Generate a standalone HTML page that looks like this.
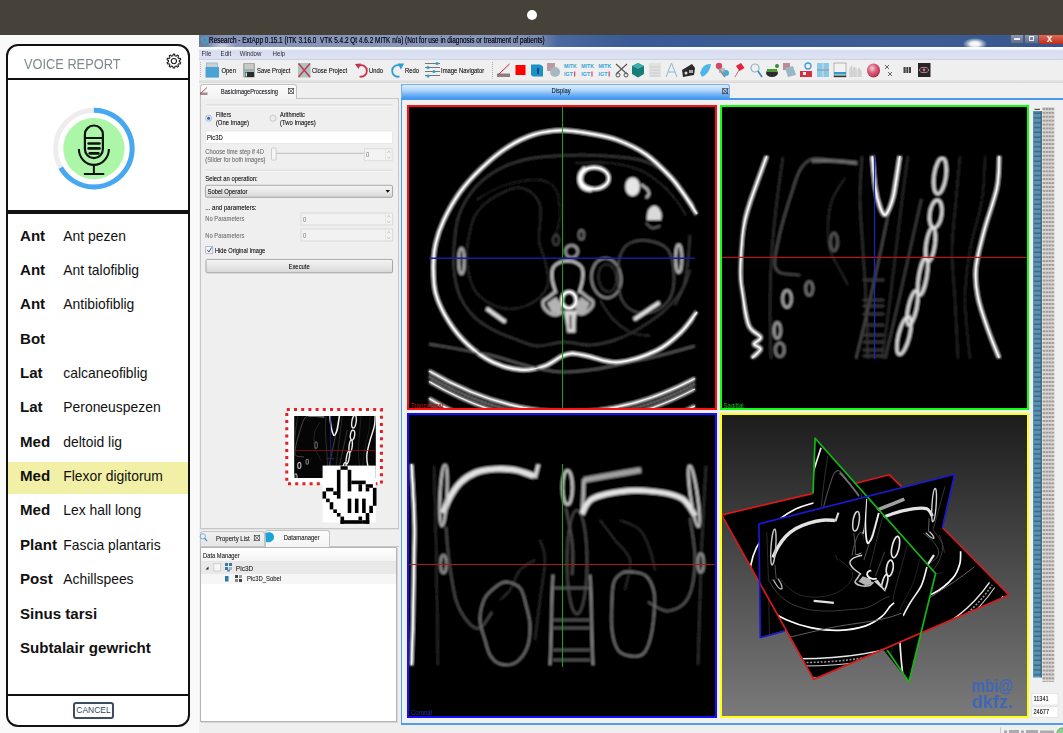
<!DOCTYPE html>
<html><head><meta charset="utf-8">
<style>
*{margin:0;padding:0;box-sizing:border-box}
html,body{width:1063px;height:733px;overflow:hidden;background:#f9f9f9;font-family:"Liberation Sans",sans-serif;position:relative}
.a{position:absolute}
#topbar{left:0;top:0;width:1063px;height:34.5px;background:#46423a}
#dot{left:526.5px;top:9.5px;width:10px;height:10px;border-radius:50%;background:#fff}
#vp{left:6px;top:44.3px;width:184px;height:682.9px;border:2.6px solid #111;border-radius:12px;background:#fff;overflow:hidden}
.hl{left:0;width:184px;background:#111}
#vtitle{left:16px;top:11.9px;font-size:12.8px;color:#7b8b8b;line-height:1;transform:scaleY(1.08);transform-origin:0 0}
.row{left:12px;height:0;color:#111;white-space:nowrap;line-height:1}
.row b{font-weight:bold;position:absolute;left:0;top:-12.78px;font-size:15.1px}
.row span{position:absolute;left:43.3px;top:-10.9px;font-size:13.9px}
#cancel{left:65px;top:655.5px;width:41px;height:17px;border:2px solid #3c4d62;border-radius:3px;font-size:8.5px;color:#34465a;text-align:center;line-height:13px}
/* app */
#app{left:198.8px;top:34.5px;width:864.2px;height:698.5px;background:#efefef}
#title{left:198.8px;top:34.5px;width:864.2px;height:13.2px;background:linear-gradient(90deg,#6a7aa2 0%,#8593b6 3%,#8896b8 30%,#8391b4 37%,#7587ad 39.5%,#4a68a0 41.5%,#3a5a95 50%,#3d5c95 85%,#36558e 100%);overflow:hidden}
#title .t{left:10.2px;top:1.6px;font-size:6.44px;line-height:1;color:#141424;white-space:nowrap;transform:scaleY(1.3);transform-origin:0 0;text-shadow:0 0 0.4px #223}
#menu{left:198.8px;top:47.4px;width:864.2px;height:12.3px;background:linear-gradient(#fcfdff 0,#fafbfe 12%,#d6ddef 30%,#dde3f3 85%,#c9cfe0 100%)}
#menu span{position:absolute;top:2.6px;font-size:6.1px;line-height:1;color:#2a2a3a;transform:scaleY(1.15);transform-origin:0 0}
#tool{left:198.8px;top:59.7px;width:864.2px;height:20px;background:#efefef}
#tsep{left:198.8px;top:79.7px;width:864.2px;height:3.8px;background:linear-gradient(#e6e6e6,#d9d9d9)}
.q{position:absolute;font-size:5.9px;line-height:1;color:#222;white-space:nowrap;transform:scaleY(1.15);transform-origin:0 0;text-shadow:0 0 0.35px rgba(0,0,0,0.45)}
.view{background:#000;overflow:hidden}
</style></head><body>
<div id="topbar" class="a"><div id="dot" class="a"></div></div>

<!-- voice panel -->
<div id="vp" class="a">
  <div id="vtitle" class="a">VOICE REPORT</div>
  <svg class="a" style="left:0;top:0" width="184" height="200" viewBox="0 0 184 200">
    <path d="M164.89,9.80 L165.15,8.14 L166.65,8.14 L166.91,9.80 L168.20,10.21 L169.39,9.03 L170.59,9.91 L169.84,11.40 L170.63,12.50 L172.29,12.24 L172.75,13.66 L171.26,14.42 L171.26,15.78 L172.75,16.54 L172.29,17.96 L170.63,17.70 L169.84,18.80 L170.59,20.29 L169.39,21.17 L168.20,19.99 L166.91,20.40 L166.65,22.06 L165.15,22.06 L164.89,20.40 L163.60,19.99 L162.41,21.17 L161.21,20.29 L161.96,18.80 L161.17,17.70 L159.51,17.96 L159.05,16.54 L160.54,15.78 L160.54,14.42 L159.05,13.66 L159.51,12.24 L161.17,12.50 L161.96,11.40 L161.21,9.91 L162.41,9.03 L163.60,10.21Z" fill="none" stroke="#1a1a1a" stroke-width="1.05" stroke-linejoin="round"/>
    <circle cx="165.9" cy="15.1" r="2.6" fill="none" stroke="#1a1a1a" stroke-width="1.05"/>
    <g transform="translate(85.9,102.6)">
      <circle r="38.3" fill="none" stroke="#ededed" stroke-width="5"/>
      <path d="M0,-38.3 A38.3,38.3 0 1 1 -33.17,19.15" fill="none" stroke="#45a8f1" stroke-width="5"/>
      <circle r="30.7" fill="#abf7a7"/>
      <rect x="-9" y="-23.1" width="18" height="32.6" rx="9" fill="none" stroke="#111" stroke-width="2.2"/>
      <line x1="-9" y1="-10.6" x2="9" y2="-10.6" stroke="#111" stroke-width="2"/>
      <line x1="-5.3" y1="-5.1" x2="5.6" y2="-5.1" stroke="#111" stroke-width="2.6" stroke-linecap="round"/>
      <line x1="-5.3" y1="-0.2" x2="5.6" y2="-0.2" stroke="#111" stroke-width="2.6" stroke-linecap="round"/>
      <line x1="-4.2" y1="4.8" x2="4.5" y2="4.8" stroke="#111" stroke-width="2.6" stroke-linecap="round"/>
      <path d="M-15,0.4 A15,15.9 0 0 0 15,0.4" fill="none" stroke="#111" stroke-width="2.1"/>
      <line x1="0" y1="16.3" x2="0" y2="25.4" stroke="#111" stroke-width="2"/>
      <line x1="-10" y1="25.4" x2="10.3" y2="25.4" stroke="#111" stroke-width="2"/>
    </g>
  </svg>
  <div class="hl a" style="top:31.5px;height:2px"></div>
  <div class="hl a" style="top:163.5px;height:3.8px"></div>
  <div class="a" style="left:0;top:416.2px;width:184px;height:31.5px;background:#f1f0a6"></div>
  <div class="row a" style="top:194.1px"><b>Ant</b><span>Ant pezen</span></div>
  <div class="row a" style="top:228.4px"><b>Ant</b><span>Ant talofiblig</span></div>
  <div class="row a" style="top:262.8px"><b>Ant</b><span>Antibiofiblig</span></div>
  <div class="row a" style="top:297.1px"><b>Bot</b></div>
  <div class="row a" style="top:331.5px"><b>Lat</b><span>calcaneofiblig</span></div>
  <div class="row a" style="top:365.9px"><b>Lat</b><span>Peroneuspezen</span></div>
  <div class="row a" style="top:400.2px"><b>Med</b><span>deltoid lig</span></div>
  <div class="row a" style="top:434.6px"><b>Med</b><span>Flexor digitorum</span></div>
  <div class="row a" style="top:468.9px"><b>Med</b><span>Lex hall long</span></div>
  <div class="row a" style="top:503.2px"><b>Plant</b><span>Fascia plantaris</span></div>
  <div class="row a" style="top:537.6px"><b>Post</b><span>Achillspees</span></div>
  <div class="row a" style="top:572.0px"><b>Sinus tarsi</b></div>
  <div class="row a" style="top:606.3px"><b>Subtalair gewricht</b></div>
  <div class="hl a" style="top:647.8px;height:2.2px"></div>
  <div id="cancel" class="a">CANCEL</div>
</div>

<div id="app" class="a"></div>
<div id="title" class="a"><svg class="a" style="left:0;top:0" width="12" height="13"><circle cx="5.5" cy="5" r="2.6" fill="none" stroke="#3aa8c8" stroke-width="1.2"/><line x1="7" y1="7" x2="9.8" y2="11" stroke="#2aa0c0" stroke-width="1.4"/></svg><div class="a" style="left:8px;top:6px;width:30px;height:9px;border-radius:50%;background:radial-gradient(rgba(255,255,255,0.55),rgba(255,255,255,0) 70%)"></div><div class="t a">Research - ExtApp 0.15.1 (ITK 3.16.0&nbsp; VTK 5.4.2 Qt 4.6.2 MITK n/a) (Not for use in diagnosis or treatment of patients)</div>
  <div class="a" style="left:764px;top:3px;width:24px;height:12px;border-radius:50%;background:radial-gradient(rgba(255,255,255,0.95) 25%,rgba(220,235,220,0.5) 50%,rgba(255,255,255,0) 72%)"></div>
  <div class="a" style="left:811px;top:0;width:14px;height:9px;background:linear-gradient(#8b97b3,#5b6d92);border:1px solid #48597e;border-top:0;border-radius:0 0 2px 2px"><div class="a" style="left:3px;top:3px;width:6px;height:2px;background:#eee"></div></div>
  <div class="a" style="left:825px;top:0;width:15px;height:9px;background:linear-gradient(#8b97b3,#5b6d92);border:1px solid #48597e;border-top:0;border-radius:0 0 2px 2px"><div class="a" style="left:4px;top:1px;width:5px;height:5px;border:1.5px solid #eee"></div></div>
  <div class="a" style="left:840px;top:0;width:25px;height:9.5px;background:linear-gradient(#e06a55,#c02c1a);border-radius:0 0 0 2px"><div class="a" style="left:8px;top:-2px;font-size:10px;color:#f4f4f4;font-weight:bold">x</div></div>
</div>
<div id="menu" class="a"><span style="left:2.7px">File</span><span style="left:21.8px">Edit</span><span style="left:40.9px">Window</span><span style="left:73.8px">Help</span></div>
<div id="tool" class="a"></div>
<svg class="a" style="left:0;top:0" width="1063" height="84" viewBox="0 0 1063 84">
  <!-- grip -->
  <line x1="200.5" y1="62" x2="200.5" y2="78" stroke="#b8b8b8" stroke-width="1" stroke-dasharray="1,1"/>
  <!-- open -->
  <rect x="206.5" y="63" width="11" height="7" fill="#cfcfcf" stroke="#8ab8d8" stroke-width="0.8"/>
  <path d="M205.5,67 h13.5 v10.6 h-13.5z" fill="#49a3d6"/>
  <!-- save -->
  <rect x="243" y="63" width="12" height="14.5" rx="1" fill="#a9a9a9"/>
  <rect x="244.5" y="64" width="9" height="5" fill="#c9c9c9"/>
  <rect x="244" y="71" width="10.5" height="6" fill="#8cc0c8"/>
  <rect x="245" y="72" width="9" height="5" fill="#2a2a2a"/><rect x="245.5" y="72.5" width="1.5" height="4" fill="#e0e0e0"/>
  <!-- close -->
  <rect x="298" y="63" width="12.5" height="14.5" fill="#a9c7c9"/>
  <path d="M298.5,63.5 L310,77 M310,63.5 L298.5,77" stroke="#d03848" stroke-width="1.6"/>
  <!-- undo -->
  <path d="M359,65.5 A5.8,5.8 0 1 1 359.5,76.5" fill="none" stroke="#c83250" stroke-width="1.8"/>
  <path d="M355,64 L361,63.5 L358.5,69 z" fill="#c83250"/>
  <!-- redo -->
  <path d="M400,65.5 A5.8,5.8 0 1 0 399.5,76.5" fill="none" stroke="#2c9fd0" stroke-width="1.8"/>
  <path d="M404,63.5 L397.5,63.5 L401,69.5 z" fill="#2c9fd0"/>
  <!-- image navigator -->
  <g stroke="#666" stroke-width="0.9"><line x1="425" y1="63.5" x2="440" y2="63.5"/><line x1="425" y1="67.5" x2="440" y2="67.5"/><line x1="425" y1="71.5" x2="440" y2="71.5"/><line x1="425" y1="75.5" x2="440" y2="75.5"/></g>
  <g fill="#2c9fd0"><circle cx="437" cy="63.5" r="1.6"/><circle cx="428" cy="67.5" r="1.6"/><circle cx="434" cy="71.5" r="1.6"/><circle cx="428" cy="76" r="1.6"/></g>
  <!-- sep -->
  <line x1="492.5" y1="62" x2="492.5" y2="78.5" stroke="#999" stroke-width="0.8" stroke-dasharray="1,1"/>
  <!-- red pen -->
  <path d="M498,75 L509.5,64" stroke="#c02040" stroke-width="1"/>
  <rect x="497" y="73.5" width="13" height="3.5" fill="#7a6060" opacity="0.8"/>
  <!-- red square -->
  <rect x="515.5" y="65" width="10" height="10" fill="#ff0000"/>
  <!-- blue cube -->
  <path d="M531,64.5 h9 l3,2 v10 h-10 l-2,-1.5z" fill="#1d90c6"/><rect x="537" y="68" width="2" height="6" fill="#0b4f78"/>
  <!-- grey pink -->
  <rect x="547" y="63" width="8" height="8" fill="#b89aa0"/><circle cx="555" cy="72" r="5" fill="#a8b8c0"/>
  <!-- MITK IGT x3 -->
  <g font-family="Liberation Sans" font-size="5.6" font-weight="bold" fill="#36a6d8">
    <text x="564" y="68.3" textLength="12.6" lengthAdjust="spacingAndGlyphs">MITK</text><text x="564" y="76" textLength="9" lengthAdjust="spacingAndGlyphs">IGT</text>
    <text x="581.3" y="68.3" textLength="12.6" lengthAdjust="spacingAndGlyphs">MITK</text><text x="581.3" y="76" textLength="9" lengthAdjust="spacingAndGlyphs">IGT</text>
    <text x="598.5" y="68.3" textLength="12.6" lengthAdjust="spacingAndGlyphs">MITK</text><text x="598.5" y="76" textLength="9" lengthAdjust="spacingAndGlyphs">IGT</text>
  </g>
  <g fill="#e04870"><rect x="574" y="71.5" width="1.3" height="5"/><rect x="591.3" y="71.5" width="1.3" height="5"/><rect x="608.5" y="71.5" width="1.3" height="5"/></g>
  <!-- scissors -->
  <path d="M616,64 L627,74 M627,64 L616,74" stroke="#555" stroke-width="1.1"/><circle cx="618" cy="75" r="2" fill="none" stroke="#555"/><circle cx="626" cy="75" r="2" fill="none" stroke="#555"/>
  <!-- teal cube -->
  <path d="M638,63 l6,3 v8 l-6,3.5 l-6,-3.5 v-8z" fill="#177d78"/><path d="M638,63 l6,3 l-6,3 l-6,-3z" fill="#3fb0a6"/>
  <!-- grid -->
  <rect x="649" y="63" width="12" height="14" fill="#e2e2e2"/><g stroke="#c2c2c2" stroke-width="0.7"><line x1="650" y1="67" x2="660" y2="67"/><line x1="650" y1="70" x2="660" y2="70"/><line x1="650" y1="73" x2="660" y2="73"/><line x1="650" y1="76" x2="660" y2="76"/></g>
  <!-- compass -->
  <path d="M666,77 L671.5,63 L677,77 M668,72 L675,72" fill="none" stroke="#8cb8d0" stroke-width="1"/>
  <!-- camera -->
  <path d="M682,70 l10,-6 l3,4 l-1,7 l-11,2z" fill="#2a2a2a"/><circle cx="686" cy="73" r="1.5" fill="#ddd"/><rect x="689" y="70" width="4" height="3" fill="#aaa"/>
  <!-- blue shell -->
  <path d="M700,73 Q703,63 711,64 Q710,73 702,77z" fill="#4cb7e6"/>
  <!-- balloons -->
  <circle cx="719" cy="66" r="3.2" fill="#d04a6a"/><path d="M719,69 L725,77" stroke="#888" stroke-width="1.5"/><circle cx="726" cy="73" r="3" fill="#48a8d8"/><rect x="719" y="68" width="6" height="5" fill="#999" opacity="0.6"/>
  <!-- red pin -->
  <path d="M735,77 L739,70" stroke="#c07070" stroke-width="1"/><path d="M736,66 l5,-3 l3.5,5 l-5,3z" fill="#e8203a"/>
  <!-- magnifier -->
  <circle cx="755" cy="68" r="4" fill="none" stroke="#88b4cc" stroke-width="1.2"/><line x1="758" y1="71" x2="762" y2="77" stroke="#3a8ac0" stroke-width="1.6"/>
  <!-- plant -->
  <ellipse cx="772" cy="73" rx="6" ry="4" fill="#2a2a2a"/><rect x="767" y="69" width="10" height="3" fill="#4a9a3a"/><circle cx="777" cy="66" r="2" fill="#3a8a3a"/>
  <!-- pink grey cube -->
  <rect x="783" y="63" width="7" height="7" fill="#c08a94"/><path d="M785,68 l8,-2 l3,9 l-8,2z" fill="#9ab8c4"/>
  <!-- pin blue red -->
  <circle cx="808" cy="66" r="3" fill="none" stroke="#3aa0d8" stroke-width="1.3"/><rect x="800" y="71" width="12" height="6" fill="#d03048"/><rect x="803" y="72" width="3" height="3" fill="#eee"/>
  <!-- translucent -->
  <rect x="817" y="63" width="12" height="14" fill="#8cc8e8"/><line x1="823" y1="63" x2="823" y2="77" stroke="#bfe3f5" stroke-width="1.2"/><line x1="817" y1="70" x2="829" y2="70" stroke="#999" stroke-width="1.2"/>
  <!-- monitor -->
  <rect x="834" y="63" width="12" height="14" fill="#f2f2f2" stroke="#888" stroke-width="0.6"/><rect x="834" y="72" width="12" height="2.5" fill="#2a9ad0"/><rect x="834" y="75.5" width="12" height="1.5" fill="#333"/>
  <!-- histogram -->
  <path d="M850,77 v-8 l1.5,-2 v10 m1.5,0 v-7 l1.5,-3 v10 m1.5,0 v-9 m2,9 v-6 l1.5,-3 v9 m1.5,0 v-7" fill="none" stroke="#cfcfcf" stroke-width="1.3"/>
  <!-- red sphere -->
  <defs><radialGradient id="sph" cx="0.4" cy="0.35" r="0.7"><stop offset="0" stop-color="#f8c8d8"/><stop offset="0.5" stop-color="#d85a78"/><stop offset="1" stop-color="#b02848"/></radialGradient></defs>
  <ellipse cx="873.5" cy="70.5" rx="6.5" ry="7" fill="url(#sph)"/>
  <!-- x marks -->
  <path d="M885,65 l4,4 m0,-4 l-4,4 M888,72 l4,4 m0,-4 l-4,4" stroke="#555" stroke-width="0.9"/>
  <!-- grid bars -->
  <rect x="903.5" y="67" width="7.5" height="6" fill="#444"/><line x1="906" y1="67" x2="906" y2="73" stroke="#ddd" stroke-width="0.7"/><line x1="908.5" y1="67" x2="908.5" y2="73" stroke="#ddd" stroke-width="0.7"/>
  <!-- dark eye -->
  <rect x="918" y="63" width="12.5" height="14" fill="#262626"/><ellipse cx="924" cy="70" rx="4.5" ry="2.6" fill="none" stroke="#c07a90" stroke-width="1"/><circle cx="924" cy="70" r="1.4" fill="#c07a90"/>
</svg>
<div class="q" style="left:221.5px;top:68.1px">Open</div>
<div class="q" style="left:257px;top:68.1px">Save Project</div>
<div class="q" style="left:312px;top:68.1px">Close Project</div>
<div class="q" style="left:369px;top:68.1px">Undo</div>
<div class="q" style="left:405px;top:68.1px">Redo</div>
<div class="q" style="left:441px;top:68.1px">Image Navigator</div>
<div id="tsep" class="a"></div>

<!-- left dock -->
<div class="a" style="left:199.5px;top:98px;width:199px;height:430.5px;background:#efefef;border:1px solid #c6c6c6;border-top:0"></div>
<div class="a" style="left:199.5px;top:97.5px;width:199px;height:1px;background:#c6c6c6"></div>
<div class="a" style="left:199.5px;top:83.6px;width:97.6px;height:15.2px;background:linear-gradient(#fbfbfb,#f3f3f3);border:1px solid #c2c2c2;border-bottom:0;border-radius:3px 3px 0 0"></div>
<svg class="a" style="left:0;top:0" width="1063" height="733" viewBox="0 0 1063 733">
  <path d="M200.5,93.5 L207,87.5" stroke="#c03050" stroke-width="0.9"/><rect x="200" y="92.5" width="7.5" height="2.5" fill="#8a5a60" opacity="0.7"/>
  <g stroke="#444" stroke-width="0.7" fill="none"><rect x="288.5" y="88.5" width="5" height="5"/><path d="M288,88 l6,6 m0,-6 l-6,6"/></g>
  <rect x="205.5" y="104.5" width="187" height="1.2" fill="#d6d6d6"/><rect x="205.5" y="105.7" width="187" height="0.8" fill="#fbfbfb"/>
  <circle cx="208.6" cy="118.2" r="3.1" fill="#dfe6ee" stroke="#9aa6b6" stroke-width="0.6"/><circle cx="208.6" cy="118.2" r="1.5" fill="#2a6ab0"/>
  <circle cx="273" cy="118.2" r="3.1" fill="#ececec" stroke="#b0b0b0" stroke-width="0.6"/>
  <rect x="205.5" y="131" width="187" height="12.3" fill="#fff" stroke="#e0e0e0" stroke-width="0.6"/>
  <rect x="271.5" y="148" width="4.6" height="12" rx="1" fill="#f6f6f6" stroke="#bdbdbd" stroke-width="0.7"/>
  <line x1="276.5" y1="153.3" x2="364" y2="153.3" stroke="#c8c8c8" stroke-width="1.2"/>
  <rect x="364.5" y="148.8" width="27.6" height="12" fill="#f3f3f3" stroke="#d4d4d4" stroke-width="0.7"/><line x1="385.5" y1="149" x2="385.5" y2="160.5" stroke="#ddd" stroke-width="0.6"/>
  <path d="M387.3,153 l1.5,-2 l1.5,2 M387.3,156.5 l1.5,2 l1.5,-2" fill="none" stroke="#aaa" stroke-width="0.5"/>
  <rect x="205.5" y="169.6" width="187" height="1.2" fill="#d6d6d6"/><rect x="205.5" y="170.8" width="187" height="0.8" fill="#fbfbfb"/>
  <defs><linearGradient id="btn" x1="0" y1="0" x2="0" y2="1"><stop offset="0" stop-color="#f4f4f4"/><stop offset="0.5" stop-color="#e8e8e8"/><stop offset="1" stop-color="#d6d6d6"/></linearGradient></defs>
  <rect x="205.5" y="185.3" width="187" height="12" rx="1.5" fill="url(#btn)" stroke="#8a8a8a" stroke-width="0.7"/>
  <path d="M385.5,190 h4.5 l-2.25,2.8z" fill="#111"/>
  <rect x="301" y="213" width="91.5" height="12" fill="#f2f2f2" stroke="#d2d2d2" stroke-width="0.7"/><line x1="385.5" y1="213.3" x2="385.5" y2="224.7" stroke="#ddd" stroke-width="0.6"/>
  <path d="M387.3,217.5 l1.5,-2 l1.5,2 M387.3,221 l1.5,2 l1.5,-2" fill="none" stroke="#aaa" stroke-width="0.5"/>
  <rect x="301" y="229" width="91.5" height="12" fill="#f2f2f2" stroke="#d2d2d2" stroke-width="0.7"/><line x1="385.5" y1="229.3" x2="385.5" y2="240.7" stroke="#ddd" stroke-width="0.6"/>
  <path d="M387.3,233.5 l1.5,-2 l1.5,2 M387.3,237 l1.5,2 l1.5,-2" fill="none" stroke="#aaa" stroke-width="0.5"/>
  <rect x="205.8" y="246.6" width="7" height="7" fill="#f4f6f8" stroke="#8e99a6" stroke-width="0.6"/><path d="M207.3,250 l1.6,2 l2.6,-4.5" fill="none" stroke="#28408a" stroke-width="0.9"/>
  <rect x="206" y="259.4" width="186.5" height="13.4" rx="1.5" fill="url(#btn)" stroke="#8a8a8a" stroke-width="0.7"/>
</svg>
<div class="q" style="left:221px;top:89.2px;font-size:5.6px;color:#2a2a3a">BasicImageProcessing</div>
<div class="q" style="left:215.9px;top:112.4px;font-size:5.6px">Filters</div>
<div class="q" style="left:215.9px;top:119.6px">(One Image)</div>
<div class="q" style="left:280px;top:112.4px;font-size:5.6px">Arithmetic</div>
<div class="q" style="left:280px;top:119.6px">(Two Images)</div>
<div class="q" style="left:207px;top:134.8px">Pic3D</div>
<div class="q" style="left:205.3px;top:149.1px;color:#8c8c8c;font-size:5.8px">Choose time step if 4D</div>
<div class="q" style="left:205.3px;top:156.6px;color:#8c8c8c;font-size:5.8px">(Slider for both images)</div>
<div class="q" style="left:366px;top:152.3px;color:#aaa">0</div>
<div class="q" style="left:205.3px;top:175.8px">Select an operation:</div>
<div class="q" style="left:207.5px;top:189.0px">Sobel Operator</div>
<div class="q" style="left:205.3px;top:203.6px;font-size:6.1px">... and parameters:</div>
<div class="q" style="left:205.3px;top:216.3px;color:#8c8c8c;font-size:5.8px">No Parameters</div>
<div class="q" style="left:303px;top:216.6px;color:#aaa">0</div>
<div class="q" style="left:205.3px;top:232.6px;color:#8c8c8c;font-size:5.8px">No Parameters</div>
<div class="q" style="left:303px;top:232.8px;color:#aaa">0</div>
<div class="q" style="left:215px;top:247.6px;font-size:5.7px">Hide Original Image</div>
<div class="q" style="left:288.5px;top:263.6px">Execute</div>

<!-- display dock -->
<div class="a" style="left:400.6px;top:83.6px;width:662.4px;height:641.4px;background:#f0f0f0;border-left:1.4px solid #4d9ef0;border-bottom:2px solid #4d9ef0"></div>
<div class="a" style="left:400.6px;top:83.6px;width:329.4px;height:15.6px;background:linear-gradient(#dcedfd 0%,#b6d8fb 35%,#6fb0f5 70%,#3d93ef 100%);border-radius:3px 3px 0 0;border:1px solid #78b0ec;border-bottom:0"></div>
<div class="a" style="left:400.6px;top:98.3px;width:662.4px;height:1.7px;background:#4599ee"></div>
<div class="q" style="left:551.6px;top:88.3px;color:#1a2a40;font-size:5.8px">Display</div>
<svg class="a" style="left:722px;top:88px" width="7" height="7" viewBox="0 0 7 7"><g stroke="#333" stroke-width="0.7" fill="none"><rect x="0.7" y="0.7" width="5" height="5"/><path d="M0.3,0.3 l6,6 m0,-6 l-6,6"/></g></svg>
<!-- views -->
<div id="v1" class="a view" style="left:407px;top:105.2px;width:310px;height:305.3px;border:2px solid #ff1010"><svg class="a" style="left:-409px;top:-107.2px" width="1063" height="733" viewBox="0 0 1063 733"><defs><filter id="bl1" filterUnits="userSpaceOnUse" x="0" y="0" width="1063" height="733"><feGaussianBlur stdDeviation="1.0"/></filter></defs><g filter="url(#bl1)"><rect x="429" y="107" width="266" height="301" fill="#040404"/><path d="M693.00,205.00 C690.83,202.50 684.70,195.50 680.00,190.00 C675.30,184.50 671.47,177.00 664.80,172.00 C658.13,167.00 650.80,162.75 640.00,160.00 C629.20,157.25 612.88,156.25 600.00,155.50 C587.12,154.75 574.80,154.92 562.70,155.50 C550.60,156.08 537.92,156.77 527.40,159.00 C516.88,161.23 508.10,164.35 499.60,168.90 C491.10,173.45 482.97,179.15 476.40,186.30 C469.83,193.45 463.77,203.52 460.20,211.80 C456.63,220.08 456.05,226.53 455.00,236.00 C453.95,245.47 453.13,258.70 453.90,268.60 C454.67,278.50 456.27,287.43 459.60,295.40 C462.93,303.37 468.33,310.67 473.90,316.40 C479.47,322.13 486.00,325.98 493.00,329.80 C500.00,333.62 508.57,336.60 515.90,339.30 C523.23,342.00 529.03,345.55 537.00,346.00 C544.97,346.45 554.87,342.17 563.70,342.00 C572.53,341.83 581.45,345.33 590.00,345.00 C598.55,344.67 606.67,342.83 615.00,340.00 C623.33,337.17 631.67,333.00 640.00,328.00 C648.33,323.00 658.00,316.33 665.00,310.00 C672.00,303.67 677.83,296.67 682.00,290.00 C686.17,283.33 688.67,273.33 690.00,270.00" fill="none" stroke="#444" stroke-width="1.38" />
<path d="M686.00,215.00 C684.33,212.50 680.00,205.00 676.00,200.00 C672.00,195.00 668.00,190.00 662.00,185.00 C656.00,180.00 648.67,173.67 640.00,170.00 C631.33,166.33 620.83,164.17 610.00,163.00 C599.17,161.83 580.83,163.00 575.00,163.00" fill="none" stroke="#333" stroke-width="1.15" />
<path d="M690.00,235.00 C689.67,239.17 689.00,251.67 688.00,260.00 C687.00,268.33 686.17,277.50 684.00,285.00 C681.83,292.50 676.50,301.67 675.00,305.00" fill="none" stroke="#444" stroke-width="1.26" />
<path d="M538.90,240.00 C539.67,249.02 543.02,252.12 544.60,259.10 C546.18,266.08 549.03,275.70 548.40,281.90 C547.77,288.10 544.62,292.28 540.80,296.30 C536.98,300.32 531.23,303.93 525.50,306.00 C519.77,308.07 512.77,309.37 506.40,308.70 C500.03,308.03 492.72,305.33 487.30,302.00 C481.88,298.67 477.25,294.90 473.90,288.70 C470.55,282.50 468.15,272.92 467.20,264.80 C466.25,256.68 466.73,248.47 468.20,240.00 C469.67,231.53 471.37,221.33 476.00,214.00 C480.63,206.67 488.33,200.33 496.00,196.00 C503.67,191.67 514.67,186.50 522.00,188.00 C529.33,189.50 537.18,196.33 540.00,205.00 C542.82,213.67 538.13,230.98 538.90,240.00Z" fill="none" stroke="#333" stroke-width="1.26" />
<path d="M476.00,200.00 C480.83,197.50 494.33,188.33 505.00,185.00 C515.67,181.67 531.50,179.17 540.00,180.00 C548.50,180.83 552.67,184.17 556.00,190.00 C559.33,195.83 560.00,207.50 560.00,215.00 C560.00,222.50 556.67,231.67 556.00,235.00" fill="none" stroke="#262626" stroke-width="1.26" />
<path d="M697.00,214.00 C694.85,210.75 688.47,200.62 684.10,194.50 C679.73,188.38 677.15,183.98 670.80,177.30 C664.45,170.62 654.92,160.62 646.00,154.40 C637.08,148.18 626.87,143.50 617.30,140.00 C607.73,136.50 597.70,135.00 588.60,133.40 C579.50,131.80 571.73,130.23 562.70,130.40 C553.67,130.57 543.75,131.50 534.40,134.40 C525.05,137.30 515.50,142.08 506.60,147.80 C497.70,153.52 488.73,161.35 481.00,168.70 C473.27,176.05 466.38,183.38 460.20,191.90 C454.02,200.42 447.97,211.28 443.90,219.80 C439.83,228.32 437.55,235.50 435.80,243.00 C434.05,250.50 433.42,256.38 433.40,264.80 C433.38,273.22 433.08,283.95 435.70,293.50 C438.32,303.05 443.68,313.52 449.10,322.10 C454.52,330.68 460.88,338.32 468.20,345.00 C475.52,351.68 484.08,358.05 493.00,362.20 C501.92,366.35 513.10,369.27 521.70,369.90 C530.30,370.53 537.88,368.32 544.60,366.00 C551.32,363.68 557.37,358.12 562.00,356.00 C566.63,353.88 567.95,353.25 572.40,353.30 C576.85,353.35 581.05,354.82 588.70,356.30 C596.35,357.78 606.93,363.18 618.30,362.20 C629.67,361.22 646.52,355.33 656.90,350.40 C667.28,345.47 673.92,339.00 680.60,332.60 C687.28,326.20 694.27,315.43 697.00,312.00" fill="none" stroke="#ffffff" stroke-width="2.76" />
<path d="M608.80,178.20 C608.80,184.11 602.31,188.90 594.30,188.90 C586.29,188.90 579.80,184.11 579.80,178.20 C579.80,172.29 586.29,167.50 594.30,167.50 C602.31,167.50 608.80,172.29 608.80,178.20Z" fill="none" stroke="#f4f4f4" stroke-width="2.99" />
<path d="M586.00,168.00 C585.17,169.00 581.92,171.67 581.00,174.00 C580.08,176.33 579.83,179.67 580.50,182.00 C581.17,184.33 583.08,186.75 585.00,188.00 C586.92,189.25 590.83,189.25 592.00,189.50" fill="none" stroke="#ffffff" stroke-width="4.83" />
<path d="M639.80,186.80 C639.80,191.88 636.58,196.00 632.60,196.00 C628.62,196.00 625.40,191.88 625.40,186.80 C625.40,181.72 628.62,177.60 632.60,177.60 C636.58,177.60 639.80,181.72 639.80,186.80Z" fill="#e6e6e6" stroke="none" stroke-width="1.15" />
<path d="M641.00,184.50 C642.00,185.25 645.67,187.42 647.00,189.00 C648.33,190.58 649.17,192.50 649.00,194.00 C648.83,195.50 646.50,197.33 646.00,198.00" fill="none" stroke="#c0c0c0" stroke-width="2.30" />
<path d="M647.00,220.00 C647.17,218.50 647.00,213.33 648.00,211.00 C649.00,208.67 651.33,206.58 653.00,206.00 C654.67,205.42 656.58,206.17 658.00,207.50 C659.42,208.83 661.00,211.92 661.50,214.00 C662.00,216.08 661.08,219.00 661.00,220.00Z" fill="#dadada" stroke="none" stroke-width="1.15" />
<path d="M646.00,223.00 C647.00,223.83 649.67,227.50 652.00,228.00 C654.33,228.50 658.67,226.33 660.00,226.00" fill="none" stroke="#777" stroke-width="1.38" />
<path d="M577.80,251.40 C577.80,254.82 575.02,257.60 571.60,257.60 C568.18,257.60 565.40,254.82 565.40,251.40 C565.40,247.98 568.18,245.20 571.60,245.20 C575.02,245.20 577.80,247.98 577.80,251.40Z" fill="none" stroke="#b0b0b0" stroke-width="1.95" />
<path d="M584.00,234.80 C584.00,237.34 582.84,239.40 581.40,239.40 C579.96,239.40 578.80,237.34 578.80,234.80 C578.80,232.26 579.96,230.20 581.40,230.20 C582.84,230.20 584.00,232.26 584.00,234.80Z" fill="none" stroke="#8a8a8a" stroke-width="1.38" />
<path d="M559.00,240.00 C559.00,242.76 557.66,245.00 556.00,245.00 C554.34,245.00 553.00,242.76 553.00,240.00 C553.00,237.24 554.34,235.00 556.00,235.00 C557.66,235.00 559.00,237.24 559.00,240.00Z" fill="none" stroke="#5a5a5a" stroke-width="1.26" />
<path d="M556.00,293.00 C555.38,290.83 552.80,284.17 552.30,280.00 C551.80,275.83 551.72,270.97 553.00,268.00 C554.28,265.03 557.60,263.33 560.00,262.20 C562.40,261.07 564.90,261.20 567.40,261.20 C569.90,261.20 572.57,261.07 575.00,262.20 C577.43,263.33 580.75,265.03 582.00,268.00 C583.25,270.97 583.00,275.83 582.50,280.00 C582.00,284.17 579.58,290.83 579.00,293.00" fill="none" stroke="#d2d2d2" stroke-width="2.30" />
<path d="M556.00,291.00 C554.83,292.00 551.17,295.17 549.00,297.00 C546.83,298.83 543.50,299.83 543.00,302.00 C542.50,304.17 544.00,307.83 546.00,310.00 C548.00,312.17 552.17,314.67 555.00,315.00 C557.83,315.33 561.67,312.50 563.00,312.00" fill="none" stroke="#bdbdbd" stroke-width="2.76" />
<path d="M580.00,291.00 C581.17,292.00 584.83,295.17 587.00,297.00 C589.17,298.83 592.50,300.00 593.00,302.00 C593.50,304.00 591.83,307.00 590.00,309.00 C588.17,311.00 584.50,313.50 582.00,314.00 C579.50,314.50 576.17,312.33 575.00,312.00" fill="none" stroke="#b5b5b5" stroke-width="2.76" />
<path d="M547,303 L556,297 L562,305 L561,314 L552,313 Z" fill="#b4b4b4" stroke="none" stroke-width="1.15" />
<path d="M590,303 L581,297 L575,305 L576,314 L585,313 Z" fill="#b0b0b0" stroke="none" stroke-width="1.15" />
<path d="M576.20,300.00 C576.20,304.53 572.98,308.20 569.00,308.20 C565.02,308.20 561.80,304.53 561.80,300.00 C561.80,295.47 565.02,291.80 569.00,291.80 C572.98,291.80 576.20,295.47 576.20,300.00Z" fill="none" stroke="#f8f8f8" stroke-width="2.99" />
<path d="M564,311 C565,318 567,325 567.4,332.5 L575.5,332.5 C575.5,325 575,318 577,311 Z" fill="#d8d8d8" stroke="none" stroke-width="1.15" />
<path d="M570.5,315 L570.5,329" fill="none" stroke="#3a3a3a" stroke-width="2.07" />
<path d="M621.02,276.55 C622.16,287.43 616.50,296.94 608.37,297.79 C600.24,298.65 592.72,290.52 591.58,279.65 C590.44,268.77 596.10,259.26 604.23,258.41 C612.36,257.55 619.88,265.68 621.02,276.55Z" fill="none" stroke="#9a9a9a" stroke-width="1.72" />
<path d="M616.45,277.06 C617.26,284.75 613.91,291.40 608.96,291.92 C604.02,292.44 599.36,286.63 598.55,278.94 C597.74,271.25 601.09,264.60 606.04,264.08 C610.98,263.56 615.64,269.37 616.45,277.06Z" fill="none" stroke="#3a3a3a" stroke-width="1.26" />
<path d="M620.00,256.00 C622.00,250.17 625.00,245.50 630.00,243.00 C635.00,240.50 643.67,239.83 650.00,241.00 C656.33,242.17 664.00,244.33 668.00,250.00 C672.00,255.67 673.67,267.00 674.00,275.00 C674.33,283.00 673.17,292.00 670.00,298.00 C666.83,304.00 660.67,308.67 655.00,311.00 C649.33,313.33 641.50,313.83 636.00,312.00 C630.50,310.17 625.00,305.67 622.00,300.00 C619.00,294.33 618.33,285.33 618.00,278.00 C617.67,270.67 618.00,261.83 620.00,256.00Z" fill="none" stroke="#555" stroke-width="1.38" />
<path d="M600.00,300.00 C602.00,303.00 607.00,312.67 612.00,318.00 C617.00,323.33 623.67,329.00 630.00,332.00 C636.33,335.00 646.67,335.33 650.00,336.00" fill="none" stroke="#383838" stroke-width="1.26" />
<path d="M634,319.5 C642,314.5 651,308 659.5,302.5" fill="none" stroke="#e6e6e6" stroke-width="3.68" />
<path d="M486.5,308.5 C493,313 499,317.5 505.5,322" fill="none" stroke="#e2e2e2" stroke-width="3.68" />
<path d="M681.80,258.60 C681.80,266.33 680.41,272.60 678.70,272.60 C676.99,272.60 675.60,266.33 675.60,258.60 C675.60,250.87 676.99,244.60 678.70,244.60 C680.41,244.60 681.80,250.87 681.80,258.60Z" fill="none" stroke="#c6c6c6" stroke-width="2.18" />
<path d="M464.30,261.00 C464.30,268.18 463.05,274.00 461.50,274.00 C459.95,274.00 458.70,268.18 458.70,261.00 C458.70,253.82 459.95,248.00 461.50,248.00 C463.05,248.00 464.30,253.82 464.30,261.00Z" fill="none" stroke="#b8b8b8" stroke-width="2.18" />
<path d="M429.00,344.00 C438.72,345.77 465.13,349.93 487.30,354.60 C509.47,359.27 536.55,371.10 562.00,372.00 C587.45,372.90 617.83,364.33 640.00,360.00 C662.17,355.67 685.83,348.33 695.00,346.00" fill="none" stroke="#6a6a6a" stroke-width="1.49" />
<path d="M429,371 Q562,449 695,378.5" fill="none" stroke="#e8e8e8" stroke-width="2.42" />
<path d="M429,376.5 Q562,454.5 695,384" fill="none" stroke="#9a9a9a" stroke-width="2.53" stroke-dasharray="2,1.6"/>
<path d="M429,381.5 Q562,459.5 695,389" fill="none" stroke="#d4d4d4" stroke-width="1.84" />
<path d="M429,398.5 Q562,476 695,406" fill="none" stroke="#e0e0e0" stroke-width="2.42" />
<path d="M429,404 Q562,481.5 695,411.5" fill="none" stroke="#9a9a9a" stroke-width="2.53" stroke-dasharray="2,1.6"/></g></svg><svg class="a" style="left:-409px;top:-107.2px" width="1063" height="733" viewBox="0 0 1063 733"><defs><filter id="bl2" filterUnits="userSpaceOnUse" x="0" y="0" width="1063" height="733"><feGaussianBlur stdDeviation="0.01"/></filter></defs><g filter="url(#bl2)"><path d="M697.00,214.00 C694.85,210.75 688.47,200.62 684.10,194.50 C679.73,188.38 677.15,183.98 670.80,177.30 C664.45,170.62 654.92,160.62 646.00,154.40 C637.08,148.18 626.87,143.50 617.30,140.00 C607.73,136.50 597.70,135.00 588.60,133.40 C579.50,131.80 571.73,130.23 562.70,130.40 C553.67,130.57 543.75,131.50 534.40,134.40 C525.05,137.30 515.50,142.08 506.60,147.80 C497.70,153.52 488.73,161.35 481.00,168.70 C473.27,176.05 466.38,183.38 460.20,191.90 C454.02,200.42 447.97,211.28 443.90,219.80 C439.83,228.32 437.55,235.50 435.80,243.00 C434.05,250.50 433.42,256.38 433.40,264.80 C433.38,273.22 433.08,283.95 435.70,293.50 C438.32,303.05 443.68,313.52 449.10,322.10 C454.52,330.68 460.88,338.32 468.20,345.00 C475.52,351.68 484.08,358.05 493.00,362.20 C501.92,366.35 513.10,369.27 521.70,369.90 C530.30,370.53 537.88,368.32 544.60,366.00 C551.32,363.68 557.37,358.12 562.00,356.00 C566.63,353.88 567.95,353.25 572.40,353.30 C576.85,353.35 581.05,354.82 588.70,356.30 C596.35,357.78 606.93,363.18 618.30,362.20 C629.67,361.22 646.52,355.33 656.90,350.40 C667.28,345.47 673.92,339.00 680.60,332.60 C687.28,326.20 694.27,315.43 697.00,312.00" fill="none" stroke="#fff" stroke-width="1.3" opacity="0.85"/><path d="M608.80,178.20 C608.80,184.11 602.31,188.90 594.30,188.90 C586.29,188.90 579.80,184.11 579.80,178.20 C579.80,172.29 586.29,167.50 594.30,167.50 C602.31,167.50 608.80,172.29 608.80,178.20Z" fill="none" stroke="#fff" stroke-width="1.3" opacity="0.85"/><path d="M576.20,300.00 C576.20,304.53 572.98,308.20 569.00,308.20 C565.02,308.20 561.80,304.53 561.80,300.00 C561.80,295.47 565.02,291.80 569.00,291.80 C572.98,291.80 576.20,295.47 576.20,300.00Z" fill="none" stroke="#fff" stroke-width="1.3" opacity="0.85"/><path d="M429,371 Q562,449 695,378.5" fill="none" stroke="#fff" stroke-width="1.3" opacity="0.85"/><path d="M429,381.5 Q562,459.5 695,389" fill="none" stroke="#fff" stroke-width="1.3" opacity="0.85"/><path d="M429,398.5 Q562,476 695,406" fill="none" stroke="#fff" stroke-width="1.3" opacity="0.85"/><line x1="562.5" y1="107" x2="562.5" y2="408.5" stroke="#14a014" stroke-width="1"/>
<line x1="429" y1="258.3" x2="695" y2="258.3" stroke="#1a1aa0" stroke-width="1.4"/></g></svg><div class="q" style="left:2px;top:294.6px;color:#d01010;font-size:6.2px">Transversal</div></div><!--/v1-->
<div id="v2" class="a view" style="left:719.6px;top:105.2px;width:309.4px;height:305.3px;border:2px solid #10ff10"><svg class="a" style="left:-721.6px;top:-107.2px" width="1063" height="733" viewBox="0 0 1063 733"><defs><filter id="bl3" filterUnits="userSpaceOnUse" x="0" y="0" width="1063" height="733"><feGaussianBlur stdDeviation="1.0"/></filter></defs><g filter="url(#bl3)"><rect x="742" y="155.9" width="263.5" height="203" fill="#040404"/><path d="M783.00,157.00 C782.00,164.17 778.83,184.50 777.00,200.00 C775.17,215.50 773.17,233.33 772.00,250.00 C770.83,266.67 770.17,281.83 770.00,300.00 C769.83,318.17 770.83,349.17 771.00,359.00" fill="none" stroke="#3a3a3a" stroke-width="1.38" />
<path d="M857.00,164.00 C852.50,163.33 837.50,160.83 830.00,160.00 C822.50,159.17 817.00,157.33 812.00,159.00 C807.00,160.67 803.50,164.00 800.00,170.00 C796.50,176.00 794.00,185.83 791.00,195.00 C788.00,204.17 784.50,215.50 782.00,225.00 C779.50,234.50 777.17,245.17 776.00,252.00 C774.83,258.83 774.17,262.50 775.00,266.00 C775.83,269.50 776.83,271.50 781.00,273.00 C785.17,274.50 796.83,274.67 800.00,275.00" fill="none" stroke="#555" stroke-width="1.72" />
<path d="M812.00,161.00 C815.83,161.00 827.50,160.67 835.00,161.00 C842.50,161.33 853.33,162.67 857.00,163.00" fill="none" stroke="#707070" stroke-width="2.99" />
<path d="M845.00,178.00 C842.83,181.67 834.83,192.17 832.00,200.00 C829.17,207.83 828.33,216.67 828.00,225.00 C827.67,233.33 828.00,242.50 830.00,250.00 C832.00,257.50 837.00,264.17 840.00,270.00 C843.00,275.83 846.67,282.50 848.00,285.00" fill="none" stroke="#2e2e2e" stroke-width="1.38" />
<path d="M862.00,156.00 C861.67,163.33 859.83,184.33 860.00,200.00 C860.17,215.67 862.00,233.33 863.00,250.00 C864.00,266.67 865.17,281.83 866.00,300.00 C866.83,318.17 867.67,349.17 868.00,359.00" fill="none" stroke="#3a3a3a" stroke-width="1.49" />
<path d="M908.00,156.00 C907.00,163.33 904.00,184.33 902.00,200.00 C900.00,215.67 898.00,233.33 896.00,250.00 C894.00,266.67 892.33,281.83 890.00,300.00 C887.67,318.17 883.33,349.17 882.00,359.00" fill="none" stroke="#333" stroke-width="1.49" />
<path d="M960.00,156.00 C959.33,163.33 957.33,184.33 956.00,200.00 C954.67,215.67 952.17,233.33 952.00,250.00 C951.83,266.67 954.00,281.83 955.00,300.00 C956.00,318.17 957.50,349.17 958.00,359.00" fill="none" stroke="#303030" stroke-width="1.38" />
<path d="M899.00,157.00 C896.67,169.17 889.83,206.17 885.00,230.00 C880.17,253.83 874.83,278.50 870.00,300.00 C865.17,321.50 858.33,349.17 856.00,359.00" fill="none" stroke="#5a5a5a" stroke-width="1.49" />
<path d="M921.40,199.00 C919.50,207.50 913.75,233.17 910.00,250.00 C906.25,266.83 903.07,281.83 898.90,300.00 C894.73,318.17 887.32,349.17 885.00,359.00" fill="none" stroke="#4a4a4a" stroke-width="1.49" />
<path d="M985.00,156.00 C984.50,163.33 984.50,184.33 982.00,200.00 C979.50,215.67 972.83,233.33 970.00,250.00 C967.17,266.67 965.00,281.83 965.00,300.00 C965.00,318.17 969.17,349.17 970.00,359.00" fill="none" stroke="#2a2a2a" stroke-width="1.26" />
<path d="M791.50,298.80 C791.50,303.49 789.49,307.30 787.00,307.30 C784.51,307.30 782.50,303.49 782.50,298.80 C782.50,294.11 784.51,290.30 787.00,290.30 C789.49,290.30 791.50,294.11 791.50,298.80Z" fill="none" stroke="#b8b8b8" stroke-width="2.18" />
<path d="M812.80,288.50 C812.80,292.37 811.19,295.50 809.20,295.50 C807.21,295.50 805.60,292.37 805.60,288.50 C805.60,284.63 807.21,281.50 809.20,281.50 C811.19,281.50 812.80,284.63 812.80,288.50Z" fill="none" stroke="#7a7a7a" stroke-width="2.18" />
<path d="M780.70,330.40 C780.70,334.82 779.18,338.40 777.30,338.40 C775.42,338.40 773.90,334.82 773.90,330.40 C773.90,325.98 775.42,322.40 777.30,322.40 C779.18,322.40 780.70,325.98 780.70,330.40Z" fill="none" stroke="#a8a8a8" stroke-width="2.18" />
<path d="M784.30,349.80 C784.30,353.67 782.29,356.80 779.80,356.80 C777.31,356.80 775.30,353.67 775.30,349.80 C775.30,345.93 777.31,342.80 779.80,342.80 C782.29,342.80 784.30,345.93 784.30,349.80Z" fill="none" stroke="#8a8a8a" stroke-width="2.18" />
<path d="M837.60,242.00 C837.60,246.97 835.99,251.00 834.00,251.00 C832.01,251.00 830.40,246.97 830.40,242.00 C830.40,237.03 832.01,233.00 834.00,233.00 C835.99,233.00 837.60,237.03 837.60,242.00Z" fill="none" stroke="#5e5e5e" stroke-width="2.18" />
<path d="M863,280 L884,280" fill="none" stroke="#3a3a3a" stroke-width="2.07" />
<path d="M863,300 L884,300" fill="none" stroke="#3a3a3a" stroke-width="2.07" />
<path d="M863,306 L884,306" fill="none" stroke="#3a3a3a" stroke-width="2.07" />
<path d="M863,314 L884,314" fill="none" stroke="#3a3a3a" stroke-width="2.07" />
<path d="M863,325 L884,325" fill="none" stroke="#3a3a3a" stroke-width="2.07" />
<path d="M863,335 L884,335" fill="none" stroke="#3a3a3a" stroke-width="2.07" />
<path d="M863,342 L884,342" fill="none" stroke="#3a3a3a" stroke-width="2.07" />
<path d="M863,350 L884,350" fill="none" stroke="#3a3a3a" stroke-width="2.07" />
<path d="M863,356 L884,356" fill="none" stroke="#3a3a3a" stroke-width="2.07" />
<path d="M766.80,155.90 C765.33,159.92 760.72,172.48 758.00,180.00 C755.28,187.52 752.67,194.33 750.50,201.00 C748.33,207.67 746.37,214.17 745.00,220.00 C743.63,225.83 743.10,227.20 742.30,236.00 C741.50,244.80 740.25,263.63 740.20,272.80 C740.15,281.97 740.58,282.27 742.00,291.00 C743.42,299.73 745.58,317.50 748.70,325.20 C751.82,332.90 759.83,334.07 760.70,337.20 C761.57,340.33 753.90,342.03 753.90,344.00 C753.90,345.97 761.02,346.67 760.70,349.00 C760.38,351.33 753.45,356.50 752.00,358.00" fill="none" stroke="#f0f0f0" stroke-width="2.76" />
<path d="M999.20,155.90 C998.83,161.18 999.47,175.27 997.00,187.60 C994.53,199.93 987.92,216.52 984.40,229.90 C980.88,243.28 976.97,256.63 975.90,267.90 C974.83,279.17 975.88,286.93 978.00,297.50 C980.12,308.07 985.07,321.22 988.60,331.30 C992.13,341.38 997.43,353.55 999.20,358.00" fill="none" stroke="#f0f0f0" stroke-width="2.76" />
<path d="M872.30,156.00 C872.80,161.27 874.02,179.10 875.30,187.60 C876.58,196.10 878.38,202.43 880.00,207.00 C881.62,211.57 883.33,215.00 885.00,215.00 C886.67,215.00 888.58,210.17 890.00,207.00 C891.42,203.83 892.33,201.33 893.50,196.00 C894.67,190.67 895.95,181.67 897.00,175.00 C898.05,168.33 899.33,159.17 899.80,156.00" fill="none" stroke="#f2f2f2" stroke-width="2.99" />
<path d="M945.94,176.84 C944.56,186.68 940.78,194.29 937.49,193.82 C934.21,193.36 932.67,185.01 934.06,175.16 C935.44,165.32 939.22,157.71 942.51,158.18 C945.79,158.64 947.33,166.99 945.94,176.84Z" fill="none" stroke="#e6e6e6" stroke-width="2.76" />
<path d="M941.64,214.84 C940.57,222.49 937.03,228.32 933.75,227.86 C930.47,227.40 928.68,220.82 929.76,213.16 C930.83,205.51 934.37,199.68 937.65,200.14 C940.93,200.60 942.72,207.18 941.64,214.84Z" fill="none" stroke="#e6e6e6" stroke-width="2.76" />
<path d="M934.86,245.21 C933.55,254.51 930.54,261.77 928.13,261.43 C925.73,261.10 924.84,253.29 926.14,243.99 C927.45,234.69 930.46,227.43 932.87,227.77 C935.27,228.10 936.16,235.91 934.86,245.21Z" fill="none" stroke="#e6e6e6" stroke-width="2.76" />
<path d="M926.74,277.09 C924.92,287.43 921.68,295.49 919.50,295.11 C917.33,294.73 917.04,286.04 918.86,275.71 C920.68,265.37 923.92,257.31 926.10,257.69 C928.27,258.07 928.56,266.76 926.74,277.09Z" fill="none" stroke="#e6e6e6" stroke-width="2.76" />
<path d="M916.51,308.87 C914.50,318.33 911.03,325.60 908.76,325.12 C906.49,324.64 906.28,316.58 908.29,307.13 C910.30,297.67 913.77,290.40 916.04,290.88 C918.31,291.36 918.52,299.42 916.51,308.87Z" fill="none" stroke="#e6e6e6" stroke-width="2.76" />
<path d="M909.34,336.83 C906.73,347.28 902.23,355.16 899.28,354.42 C896.34,353.69 896.06,344.62 898.66,334.17 C901.27,323.72 905.77,315.84 908.72,316.58 C911.66,317.31 911.94,326.38 909.34,336.83Z" fill="none" stroke="#e6e6e6" stroke-width="2.76" /></g></svg><svg class="a" style="left:-721.6px;top:-107.2px" width="1063" height="733" viewBox="0 0 1063 733"><defs><filter id="bl4" filterUnits="userSpaceOnUse" x="0" y="0" width="1063" height="733"><feGaussianBlur stdDeviation="0.01"/></filter></defs><g filter="url(#bl4)"><path d="M766.80,155.90 C765.33,159.92 760.72,172.48 758.00,180.00 C755.28,187.52 752.67,194.33 750.50,201.00 C748.33,207.67 746.37,214.17 745.00,220.00 C743.63,225.83 743.10,227.20 742.30,236.00 C741.50,244.80 740.25,263.63 740.20,272.80 C740.15,281.97 740.58,282.27 742.00,291.00 C743.42,299.73 745.58,317.50 748.70,325.20 C751.82,332.90 759.83,334.07 760.70,337.20 C761.57,340.33 753.90,342.03 753.90,344.00 C753.90,345.97 761.02,346.67 760.70,349.00 C760.38,351.33 753.45,356.50 752.00,358.00" fill="none" stroke="#fff" stroke-width="1.3" opacity="0.85"/><path d="M999.20,155.90 C998.83,161.18 999.47,175.27 997.00,187.60 C994.53,199.93 987.92,216.52 984.40,229.90 C980.88,243.28 976.97,256.63 975.90,267.90 C974.83,279.17 975.88,286.93 978.00,297.50 C980.12,308.07 985.07,321.22 988.60,331.30 C992.13,341.38 997.43,353.55 999.20,358.00" fill="none" stroke="#fff" stroke-width="1.3" opacity="0.85"/><path d="M872.30,156.00 C872.80,161.27 874.02,179.10 875.30,187.60 C876.58,196.10 878.38,202.43 880.00,207.00 C881.62,211.57 883.33,215.00 885.00,215.00 C886.67,215.00 888.58,210.17 890.00,207.00 C891.42,203.83 892.33,201.33 893.50,196.00 C894.67,190.67 895.95,181.67 897.00,175.00 C898.05,168.33 899.33,159.17 899.80,156.00" fill="none" stroke="#fff" stroke-width="1.3" opacity="0.85"/><line x1="721" y1="257.3" x2="1028" y2="257.3" stroke="#b01818" stroke-width="1.2"/>
<line x1="874.5" y1="156" x2="874.5" y2="359" stroke="#2222c0" stroke-width="1.2"/></g></svg><div class="q" style="left:2px;top:294.6px;color:#10c010;font-size:6px">Sagittal</div></div><!--/v2-->
<div id="v3" class="a view" style="left:407px;top:413.2px;width:310px;height:305px;border:2px solid #1010ff"><svg class="a" style="left:-409px;top:-415.2px" width="1063" height="733" viewBox="0 0 1063 733"><defs><filter id="bl5" filterUnits="userSpaceOnUse" x="0" y="0" width="1063" height="733"><feGaussianBlur stdDeviation="1.0"/></filter></defs><g filter="url(#bl5)"><rect x="409.2" y="463.9" width="306.6" height="203" fill="#040404"/><path d="M434.00,466.00 C434.33,478.33 435.50,517.67 436.00,540.00 C436.50,562.33 436.67,579.17 437.00,600.00 C437.33,620.83 437.83,654.17 438.00,665.00" fill="none" stroke="#333" stroke-width="1.38" />
<path d="M706.00,466.00 C705.33,478.33 703.00,517.67 702.00,540.00 C701.00,562.33 700.67,579.17 700.00,600.00 C699.33,620.83 698.33,654.17 698.00,665.00" fill="none" stroke="#3a3a3a" stroke-width="1.49" />
<path d="M446.00,527.00 C446.50,532.50 447.33,547.83 449.00,560.00 C450.67,572.17 452.83,589.67 456.00,600.00 C459.17,610.33 464.00,617.33 468.00,622.00 C472.00,626.67 476.00,629.67 480.00,628.00 C484.00,626.33 490.00,614.67 492.00,612.00" fill="none" stroke="#555" stroke-width="1.61" />
<path d="M600.00,520.00 C602.50,523.33 610.00,533.33 615.00,540.00 C620.00,546.67 628.33,551.67 630.00,560.00 C631.67,568.33 625.83,585.00 625.00,590.00" fill="none" stroke="#333" stroke-width="1.38" />
<path d="M620.00,520.00 C623.33,521.67 635.00,525.00 640.00,530.00 C645.00,535.00 647.50,543.33 650.00,550.00 C652.50,556.67 654.17,566.67 655.00,570.00" fill="none" stroke="#333" stroke-width="1.38" />
<path d="M500.00,600.00 C501.67,598.33 506.67,595.00 510.00,590.00 C513.33,585.00 515.83,575.00 520.00,570.00 C524.17,565.00 532.50,561.67 535.00,560.00" fill="none" stroke="#333" stroke-width="1.38" />
<path d="M540.00,540.00 C540.83,543.33 545.00,550.00 545.00,560.00 C545.00,570.00 541.67,586.67 540.00,600.00 C538.33,613.33 535.83,633.33 535.00,640.00" fill="none" stroke="#333" stroke-width="1.38" />
<path d="M587.00,562.00 C587.00,590.72 582.52,614.00 577.00,614.00 C571.48,614.00 567.00,590.72 567.00,562.00 C567.00,533.28 571.48,510.00 577.00,510.00 C582.52,510.00 587.00,533.28 587.00,562.00Z" fill="none" stroke="#4e4e4e" stroke-width="1.72" />
<path d="M690.00,518.00 C690.83,525.00 695.33,546.67 695.00,560.00 C694.67,573.33 692.50,589.50 688.00,598.00 C683.50,606.50 674.67,610.33 668.00,611.00 C661.33,611.67 651.33,603.50 648.00,602.00" fill="none" stroke="#5e5e5e" stroke-width="1.72" />
<path d="M485.00,640.00 C483.33,634.17 480.17,626.67 480.00,620.00 C479.83,613.33 482.00,605.00 484.00,600.00 C486.00,595.00 488.50,593.00 492.00,590.00 C495.50,587.00 500.33,582.33 505.00,582.00 C509.67,581.67 516.50,584.17 520.00,588.00 C523.50,591.83 524.33,598.83 526.00,605.00 C527.67,611.17 529.83,617.83 530.00,625.00 C530.17,632.17 529.50,641.67 527.00,648.00 C524.50,654.33 519.50,660.33 515.00,663.00 C510.50,665.67 504.17,665.33 500.00,664.00 C495.83,662.67 492.50,659.00 490.00,655.00 C487.50,651.00 486.67,645.83 485.00,640.00Z" fill="none" stroke="#7a7a7a" stroke-width="1.84" />
<path d="M612.00,600.00 C612.33,592.00 612.33,586.50 614.00,582.00 C615.67,577.50 619.00,574.67 622.00,573.00 C625.00,571.33 628.00,571.50 632.00,572.00 C636.00,572.50 642.33,572.67 646.00,576.00 C649.67,579.33 652.67,585.50 654.00,592.00 C655.33,598.50 654.67,607.00 654.00,615.00 C653.33,623.00 651.83,633.50 650.00,640.00 C648.17,646.50 646.33,651.33 643.00,654.00 C639.67,656.67 634.17,656.67 630.00,656.00 C625.83,655.33 621.00,654.33 618.00,650.00 C615.00,645.67 613.00,638.33 612.00,630.00 C611.00,621.67 611.67,608.00 612.00,600.00Z" fill="none" stroke="#7a7a7a" stroke-width="1.84" />
<path d="M553,575 C551,600 552,630 550,665" fill="none" stroke="#9a9a9a" stroke-width="1.84" />
<path d="M590,575 C592,600 591,630 593,665" fill="none" stroke="#9a9a9a" stroke-width="1.84" />
<path d="M553,588 L590,588" fill="none" stroke="#555" stroke-width="2.53" />
<path d="M553,620 L590,620" fill="none" stroke="#555" stroke-width="2.53" />
<path d="M553,628 L590,628" fill="none" stroke="#555" stroke-width="2.53" />
<path d="M553,650 L590,650" fill="none" stroke="#555" stroke-width="2.53" />
<path d="M553,660 L590,660" fill="none" stroke="#555" stroke-width="2.53" />
<path d="M566,508 C570,530 575,545 572,575" fill="none" stroke="#5a5a5a" stroke-width="1.61" />
<path d="M411.50,464.00 C411.83,470.00 413.00,489.00 413.50,500.00 C414.00,511.00 414.42,520.00 414.50,530.00 C414.58,540.00 414.25,545.00 414.00,560.00 C413.75,575.00 413.42,602.50 413.00,620.00 C412.58,637.50 411.75,657.50 411.50,665.00" fill="none" stroke="#f2f2f2" stroke-width="2.53" />
<path d="M443.00,513.00 C444.17,510.33 447.00,502.17 450.00,497.00 C453.00,491.83 456.67,486.08 461.00,482.00 C465.33,477.92 470.33,474.67 476.00,472.50 C481.67,470.33 488.50,469.42 495.00,469.00 C501.50,468.58 508.50,468.83 515.00,470.00 C521.50,471.17 530.83,475.00 534.00,476.00" fill="none" stroke="#e2e2e2" stroke-width="5.75" />
<path d="M535,478 L538.5,464" fill="none" stroke="#d8d8d8" stroke-width="3.45" />
<path d="M584.00,480.00 C588.67,479.17 602.50,476.67 612.00,475.00 C621.50,473.33 636.17,470.83 641.00,470.00" fill="none" stroke="#a0a0a0" stroke-width="5.75" />
<path d="M584,479 L582.5,512" fill="none" stroke="#b0b0b0" stroke-width="3.45" />
<path d="M581.80,514.00 C583.62,511.45 585.42,502.53 592.70,498.70 C599.98,494.87 614.58,492.12 625.50,491.00 C636.42,489.88 648.73,490.72 658.20,492.00 C667.67,493.28 676.10,494.70 682.30,498.70 C688.50,502.70 693.22,513.12 695.40,516.00" fill="none" stroke="#e4e4e4" stroke-width="5.29" />
<path d="M572.50,487.50 C572.50,496.89 570.26,504.50 567.50,504.50 C564.74,504.50 562.50,496.89 562.50,487.50 C562.50,478.11 564.74,470.50 567.50,470.50 C570.26,470.50 572.50,478.11 572.50,487.50Z" fill="none" stroke="#d0d0d0" stroke-width="2.53" />
<path d="M697.47,495.51 C699.85,512.47 700.23,526.43 698.31,526.70 C696.40,526.97 692.92,513.44 690.53,496.49 C688.15,479.53 687.77,465.57 689.69,465.30 C691.60,465.03 695.08,478.56 697.47,495.51Z" fill="none" stroke="#d2d2d2" stroke-width="2.30" />
<path d="M447.00,495.18 C446.10,512.28 443.81,526.06 441.88,525.96 C439.95,525.86 439.11,511.91 440.00,494.82 C440.90,477.72 443.19,463.94 445.12,464.04 C447.05,464.14 447.89,478.09 447.00,495.18Z" fill="none" stroke="#c6c6c6" stroke-width="2.30" />
<path d="M703.70,563.00 C703.70,568.25 702.36,572.50 700.70,572.50 C699.04,572.50 697.70,568.25 697.70,563.00 C697.70,557.75 699.04,553.50 700.70,553.50 C702.36,553.50 703.70,557.75 703.70,563.00Z" fill="none" stroke="#9a9a9a" stroke-width="2.07" />
<path d="M446.50,564.00 C446.50,568.97 445.16,573.00 443.50,573.00 C441.84,573.00 440.50,568.97 440.50,564.00 C440.50,559.03 441.84,555.00 443.50,555.00 C445.16,555.00 446.50,559.03 446.50,564.00Z" fill="none" stroke="#9a9a9a" stroke-width="2.07" /></g></svg><svg class="a" style="left:-409px;top:-415.2px" width="1063" height="733" viewBox="0 0 1063 733"><defs><filter id="bl6" filterUnits="userSpaceOnUse" x="0" y="0" width="1063" height="733"><feGaussianBlur stdDeviation="0.01"/></filter></defs><g filter="url(#bl6)"><path d="M411.50,464.00 C411.83,470.00 413.00,489.00 413.50,500.00 C414.00,511.00 414.42,520.00 414.50,530.00 C414.58,540.00 414.25,545.00 414.00,560.00 C413.75,575.00 413.42,602.50 413.00,620.00 C412.58,637.50 411.75,657.50 411.50,665.00" fill="none" stroke="#fff" stroke-width="1.3" opacity="0.85"/><line x1="409" y1="564.5" x2="716" y2="564.5" stroke="#b01818" stroke-width="1.2"/>
<line x1="562.5" y1="464" x2="562.5" y2="667" stroke="#18a018" stroke-width="1"/></g></svg><div class="q" style="left:2px;top:294.2px;color:#2a2ad0;font-size:6px">Coronal</div></div><!--/v3-->
<div id="v4" class="a view" style="left:719.6px;top:413.2px;width:309.4px;height:305px;border:2px solid #ffff10;background:linear-gradient(#1c1c1c,#7a7a7a)"><svg class="a" style="left:-721.6px;top:-415.2px" width="1063" height="733" viewBox="0 0 1063 733"><defs><filter id="bl7" filterUnits="userSpaceOnUse" x="0" y="0" width="1063" height="733"><feGaussianBlur stdDeviation="0.01"/></filter></defs><g filter="url(#bl7)"><clipPath id="cpR"><path d="M721.60,514.90 L889.20,474.70 L1008.90,595.00 L813.70,679.40Z"/></clipPath><clipPath id="cpG"><path d="M815.10,438.20 L935.60,573.50 L908.90,681.90 L812.00,560.00Z"/></clipPath><clipPath id="cpB"><path d="M758.90,524.00 L954.70,474.30 L928.60,587.30 L760.30,637.50Z"/></clipPath><clipPath id="cpRF"><path d="M760.30,584.00 L942.40,527.50 L1008.90,595.00 L813.70,679.40Z"/></clipPath><clipPath id="cpGF"><path d="M866.30,497.80 L935.60,573.50 L919.00,638.00 L862.00,557.50Z"/></clipPath><path d="M721.60,514.90 L889.20,474.70 L1008.90,595.00 L813.70,679.40Z" fill="#000"/><g clip-path="url(#cpR)"><path d="M916.41,509.36  C914.28,508.80 908.29,507.24 903.66,506.01  C899.04,504.77 894.26,502.68 888.70,501.95  C883.13,501.21 877.40,500.84 870.07,501.56  C862.66,502.29 852.32,504.56 844.01,506.39  C835.58,508.26 827.64,510.42 819.84,512.73  C811.90,515.08 803.45,517.63 796.79,520.44  C790.01,523.31 784.60,526.27 779.70,529.84  C774.70,533.48 770.20,537.62 767.19,542.18  C764.12,546.84 762.19,552.86 761.69,557.61  C761.19,562.47 762.57,565.78 764.48,570.78  C766.42,575.87 769.74,582.99 773.44,588.07  C777.21,593.24 781.43,597.73 786.87,601.24  C792.35,604.79 799.41,607.37 806.09,609.01  C812.78,610.66 819.58,610.93 826.73,611.04  C833.85,611.15 841.87,610.32 848.73,609.69  C855.55,609.07 861.48,609.38 867.79,607.32  C874.02,605.27 879.65,600.13 886.07,597.59  C892.39,595.10 900.24,594.55 906.12,592.09  C911.93,589.67 916.71,586.63 921.13,583.08  C925.47,579.60 929.16,575.52 932.42,571.14  C935.61,566.84 938.86,561.58 940.53,557.18  C942.17,552.87 942.79,548.60 942.55,544.89  C942.31,541.25 939.76,536.62 939.21,535.00" fill="none" stroke="#444" stroke-width="0.84" />
<path d="M916.00,514.23  C914.13,513.57 908.94,511.51 904.84,510.32  C900.76,509.14 896.69,507.95 891.45,507.10  C886.21,506.25 879.73,505.13 873.32,505.19  C866.87,505.25 859.75,506.18 852.65,507.53  C845.46,508.90 834.04,512.48 830.23,513.49" fill="none" stroke="#333" stroke-width="0.70" />
<path d="M925.69,521.13  C927.07,522.80 931.45,527.82 934.10,531.33  C936.79,534.89 939.95,538.82 941.70,542.38  C943.47,545.99 944.06,551.04 944.54,552.82" fill="none" stroke="#444" stroke-width="0.77" />
<path d="M830.06,553.02  C833.66,557.02 837.13,557.71 840.68,560.63  C844.27,563.58 849.77,567.53 851.56,570.70  C853.38,573.90 852.62,576.77 851.30,579.76  C849.96,582.78 847.00,586.15 843.43,588.75  C839.82,591.38 834.88,593.98 829.65,595.37  C824.37,596.78 817.56,597.34 812.01,597.03  C806.45,596.72 801.37,595.94 796.52,593.48  C791.71,591.03 786.61,586.54 783.24,582.49  C779.91,578.50 777.76,574.16 776.36,569.52  C774.99,564.96 773.31,559.59 774.79,555.03  C776.24,550.55 780.28,545.96 784.80,542.37  C789.23,538.85 795.74,534.36 801.46,533.54  C807.14,532.72 814.78,534.07 819.47,537.22  C824.22,540.40 826.51,549.08 830.06,553.02  Z" fill="none" stroke="#333" stroke-width="0.77" />
<path d="M770.75,548.50  C773.75,546.30 781.32,539.31 788.26,535.67  C795.04,532.09 805.57,527.95 811.76,526.66  C817.89,525.39 821.77,525.98 825.86,527.74  C829.97,529.52 834.17,534.28 836.61,537.48  C839.09,540.72 839.84,545.43 840.50,547.05" fill="none" stroke="#262626" stroke-width="0.77" />
<path d="M921.94,512.01  C919.53,511.17 912.26,508.50 907.59,506.98  C902.94,505.46 899.93,504.29 893.98,502.90  C888.03,501.51 879.14,499.44 871.85,498.62  C864.54,497.79 856.92,497.72 850.00,497.96  C843.04,498.21 836.33,499.25 830.11,500.12  C823.83,500.99 818.36,501.67 812.52,503.21  C806.60,504.76 800.23,506.78 794.69,509.48  C789.05,512.24 783.69,515.82 778.93,519.75  C774.07,523.76 769.61,528.78 765.84,533.46  C761.98,538.27 758.66,543.00 756.15,548.24  C753.58,553.61 751.70,560.23 750.73,565.39  C749.75,570.68 749.87,574.93 750.53,579.28  C751.21,583.72 752.38,587.04 754.86,591.64  C757.37,596.31 760.39,602.46 765.68,607.18  C771.05,611.97 779.22,616.53 786.89,619.99  C794.62,623.47 802.89,626.10 811.66,627.84  C820.45,629.58 830.17,630.72 839.28,630.37  C848.32,630.02 858.62,628.19 865.76,625.84  C872.81,623.51 877.76,619.86 881.93,616.46  C886.02,613.13 888.18,608.22 890.70,605.71  C893.20,603.23 893.89,602.51 897.14,601.30  C900.37,600.09 904.01,599.72 910.07,598.42  C916.08,597.13 925.79,597.13 933.09,593.58  C940.25,590.10 948.59,582.85 953.00,577.88  C957.29,573.04 958.51,568.45 959.77,563.98  C960.99,559.60 960.49,553.33 960.63,551.26" fill="none" stroke="#ffffff" stroke-width="1.68" />
<path d="M856.75,513.48  C858.68,515.75 856.11,518.76 850.96,520.19  C845.75,521.65 839.96,520.92 838.09,518.58  C836.24,516.26 838.97,513.26 844.13,511.88  C849.23,510.51 854.85,511.23 856.75,513.48  Z" fill="none" stroke="#f4f4f4" stroke-width="1.82" />
<path d="M838.94,513.50  C838.71,514.04 837.43,515.64 837.56,516.71  C837.69,517.79 838.57,519.15 839.75,519.95  C840.93,520.76 842.96,521.37 844.62,521.52  C846.28,521.67 848.83,520.96 849.67,520.85" fill="none" stroke="#ffffff" stroke-width="2.94" />
<path d="M878.78,511.45  C880.50,513.37 879.93,515.49 877.49,516.18  C875.03,516.87 871.65,515.85 869.95,513.90  C868.27,511.97 868.89,509.88 871.33,509.21  C873.75,508.55 877.08,509.55 878.78,511.45  Z" fill="#e6e6e6" stroke="none" stroke-width="0.70" />
<path d="M878.74,510.39  C879.59,510.50 882.54,510.70 883.88,511.06  C885.21,511.43 886.37,512.01 886.79,512.60  C887.20,513.20 886.42,514.29 886.35,514.63" fill="none" stroke="#c0c0c0" stroke-width="1.40" />
<path d="M894.67,522.96  C894.24,522.34 892.30,520.35 892.09,519.27  C891.87,518.19 892.55,516.98 893.35,516.47  C894.15,515.96 895.56,515.92 896.87,516.18  C898.19,516.44 900.23,517.35 901.27,518.06  C902.31,518.77 902.81,520.05 903.12,520.46  Z" fill="#dadada" stroke="none" stroke-width="0.70" />
<path d="M895.13,524.32  C896.04,524.47 898.99,525.43 900.59,525.21  C902.18,524.98 904.01,523.34 904.69,522.97" fill="none" stroke="#777" stroke-width="0.84" />
<path d="M861.24,549.73  C862.46,551.26 861.55,553.13 859.20,553.87  C856.83,554.63 853.91,553.97 852.70,552.41  C851.51,550.86 852.46,549.01 854.81,548.28  C857.16,547.56 860.03,548.20 861.24,549.73  Z" fill="none" stroke="#b0b0b0" stroke-width="1.19" />
<path d="M859.60,541.14  C860.49,542.23 860.43,543.37 859.46,543.67  C858.48,543.97 856.98,543.31 856.10,542.20  C855.22,541.10 855.30,539.97 856.27,539.68  C857.23,539.39 858.72,540.04 859.60,541.14  Z" fill="none" stroke="#8a8a8a" stroke-width="0.84" />
<path d="M844.29,548.65  C845.24,549.89 845.07,551.19 843.91,551.55  C842.74,551.92 841.03,551.19 840.09,549.94  C839.15,548.70 839.34,547.41 840.50,547.05  C841.66,546.70 843.35,547.42 844.29,548.65  Z" fill="none" stroke="#5a5a5a" stroke-width="0.77" />
<path d="M861.16,574.31  C859.90,573.39 855.57,570.74 853.68,568.83  C851.81,566.93 850.00,564.62 849.85,562.91  C849.70,561.21 851.45,559.65 852.75,558.58  C854.03,557.51 855.83,557.01 857.57,556.45  C859.31,555.90 861.11,555.25 863.20,555.23  C865.28,555.21 868.17,555.25 870.11,556.34  C872.06,557.42 873.70,559.73 874.92,561.78  C876.14,563.86 877.00,567.59 877.43,568.77" fill="none" stroke="#d2d2d2" stroke-width="1.40" />
<path d="M860.41,573.32  C859.94,574.10 858.48,576.58 857.59,578.04  C856.69,579.51 854.61,580.86 855.06,582.10  C855.51,583.34 858.01,584.84 860.32,585.44  C862.63,586.05 866.66,586.25 868.86,585.69  C871.05,585.12 872.72,582.69 873.48,582.09" fill="none" stroke="#bdbdbd" stroke-width="1.68" />
<path d="M877.36,567.57  C878.55,567.78 882.30,568.43 884.51,568.80  C886.71,569.17 889.45,568.94 890.58,569.78  C891.71,570.63 891.76,572.48 891.30,573.90  C890.83,575.32 889.28,577.46 887.74,578.33  C886.19,579.20 882.99,578.94 882.03,579.07" fill="none" stroke="#b5b5b5" stroke-width="1.68" />
<path d="M858.38,581.59  L862.67,576.30  L870.04,578.81  L872.82,583.63  L865.88,585.43  Z" fill="#b4b4b4" stroke="none" stroke-width="0.70" />
<path d="M888.92,570.98  L880.36,570.22  L879.28,575.59  L883.53,579.82  L889.43,577.09  Z" fill="#b0b0b0" stroke="none" stroke-width="0.70" />
<path d="M878.18,572.83  C879.94,575.06 879.11,577.67 876.28,578.66  C873.45,579.66 869.72,578.62 867.98,576.36  C866.25,574.11 867.16,571.53 869.97,570.57  C872.77,569.62 876.43,570.63 878.18,572.83  Z" fill="none" stroke="#f8f8f8" stroke-width="1.82" />
<path d="M873.81,581.33  C877.28,584.65 881.52,587.74 884.85,591.54  L890.65,589.40  C887.59,585.53 884.42,582.09 883.04,578.07  Z" fill="#d8d8d8" stroke="none" stroke-width="0.70" />
<path d="M880.03,581.71  L885.65,588.90" fill="none" stroke="#3a3a3a" stroke-width="1.26" />
<path d="M899.30,551.71  C904.27,556.34 904.33,561.96 899.28,564.20  C894.17,566.48 885.91,564.38 880.98,559.56  C876.13,554.83 876.43,549.33 881.50,547.24  C886.50,545.17 894.42,547.15 899.30,551.71  Z" fill="none" stroke="#9a9a9a" stroke-width="1.05" />
<path d="M896.52,552.91  C900.03,556.20 900.43,559.98 897.36,561.33  C894.28,562.69 888.90,561.05 885.41,557.68  C881.96,554.35 881.71,550.64 884.79,549.36  C887.84,548.09 893.06,549.67 896.52,552.91  Z" fill="none" stroke="#3a3a3a" stroke-width="0.77" />
<path d="M890.87,542.93  C890.00,540.04 890.19,537.47 892.44,535.44  C894.66,533.44 899.81,531.51 904.13,530.79  C908.42,530.07 913.87,529.51 918.41,531.05  C922.97,532.59 928.36,536.91 931.72,540.17  C935.11,543.47 938.06,547.54 938.60,550.80  C939.15,554.11 937.30,557.52 934.75,559.81  C932.16,562.14 927.40,564.13 923.12,564.53  C918.82,564.93 913.40,564.09 909.16,562.13  C904.93,560.19 900.95,556.23 897.90,553.00  C894.88,549.81 891.75,545.86 890.87,542.93  Z" fill="none" stroke="#555" stroke-width="0.84" />
<path d="M894.54,567.18  C897.08,568.14 904.34,571.60 909.87,572.98  C915.41,574.36 922.21,575.51 927.64,575.44  C933.05,575.37 939.85,573.06 942.26,572.60" fill="none" stroke="#383838" stroke-width="0.77" />
<path d="M924.95,568.51  C928.00,564.33 930.99,559.33 934.02,555.01" fill="none" stroke="#e6e6e6" stroke-width="2.24" />
<path d="M813.66,600.86  C820.54,601.51 827.01,602.30 833.86,602.95" fill="none" stroke="#e2e2e2" stroke-width="2.24" />
<path d="M929.92,531.93  C932.94,535.07 934.59,537.91 933.57,538.25  C932.55,538.58 929.25,536.26 926.24,533.10  C923.27,529.98 921.71,527.22 922.72,526.91  C923.72,526.60 926.93,528.83 929.92,531.93  Z" fill="none" stroke="#c6c6c6" stroke-width="1.33" />
<path d="M779.67,581.26  C781.93,585.04 782.76,588.49 781.48,588.91  C780.19,589.33 777.31,586.54 775.07,582.73  C772.85,578.97 772.11,575.64 773.37,575.25  C774.63,574.85 777.44,577.53 779.67,581.26  Z" fill="none" stroke="#b8b8b8" stroke-width="1.33" />
<path d="M776.43,640.38  C785.93,638.17 810.86,631.91 831.52,627.55  C851.58,623.31 877.92,621.90 897.61,614.71  C916.52,607.80 933.73,594.82 946.48,586.83  C958.69,579.17 969.95,570.07 974.40,566.89" fill="none" stroke="#6a6a6a" stroke-width="0.91" />
<path d="M786.11,658.50  Q934.19,662.33 989.54,582.30" fill="none" stroke="#e8e8e8" stroke-width="1.47" />
<path d="M788.15,662.32  Q937.04,666.03 992.19,585.00" fill="none" stroke="#9a9a9a" stroke-width="1.54" stroke-dasharray="2,1.6"/>
<path d="M790.03,665.84  Q939.66,669.44 994.63,587.47" fill="none" stroke="#d4d4d4" stroke-width="1.12" />
<path d="M796.58,678.11  Q948.49,680.95 1003.06,596.06" fill="none" stroke="#e0e0e0" stroke-width="1.47" />
<path d="M798.76,682.18  Q951.51,684.88 1005.85,598.89" fill="none" stroke="#9a9a9a" stroke-width="1.54" stroke-dasharray="2,1.6"/></g><path d="M815.10,438.20 L935.60,573.50 L908.90,681.90 L812.00,560.00Z" fill="#000"/><g clip-path="url(#cpG)"><path d="M827.69,456.03  C827.06,460.56 825.18,472.85 824.03,482.14  C822.92,491.13 821.72,501.18 820.90,510.56  C820.11,519.65 819.56,527.85 819.14,537.65  C818.73,547.13 818.50,563.18 818.38,568.03" fill="none" stroke="#3a3a3a" stroke-width="0.84" />
<path d="M858.94,496.53  C857.01,493.84 850.62,484.75 847.43,480.52  C844.25,476.31 841.98,472.39 839.78,471.14  C837.59,469.91 835.98,470.54 834.29,472.98  C832.62,475.39 831.26,480.76 829.74,485.35  C828.26,489.85 826.55,495.38 825.31,500.10  C824.10,504.73 822.96,510.04 822.35,513.52  C821.76,516.95 821.43,518.76 821.66,521.12  C821.89,523.47 822.21,525.04 823.71,527.73  C825.21,530.43 829.53,535.75 830.70,537.36" fill="none" stroke="#555" stroke-width="1.05" />
<path d="M839.69,472.53  C841.32,474.36 846.32,479.77 849.53,483.65  C852.77,487.55 857.42,493.81 859.01,495.86" fill="none" stroke="#707070" stroke-width="1.82" />
<path d="M852.88,499.96  C851.74,501.31 847.80,504.24 846.23,507.87  C844.69,511.44 843.94,516.50 843.42,521.41  C842.92,526.23 842.64,531.78 843.10,537.05  C843.55,542.26 845.20,548.34 846.10,552.97  C846.99,557.55 848.09,562.87 848.48,564.82" fill="none" stroke="#2e2e2e" stroke-width="0.84" />
<path d="M861.69,493.58  C861.04,498.41 858.86,511.38 857.95,521.45  C857.06,531.19 856.77,542.61 856.21,552.69  C855.67,562.46 855.29,571.21 854.63,581.11  C853.99,590.69 852.74,606.07 852.38,610.80" fill="none" stroke="#3a3a3a" stroke-width="0.91" />
<path d="M882.62,517.15  C881.48,521.54 878.26,533.65 876.06,542.44  C873.94,550.94 871.73,560.30 869.68,568.77  C867.70,576.95 866.01,584.22 863.93,592.50  C861.92,600.48 858.51,613.30 857.49,617.23" fill="none" stroke="#333" stroke-width="0.91" />
<path d="M907.39,545.04  C906.17,549.48 902.75,561.74 900.37,570.61  C898.08,579.18 895.14,587.97 893.42,597.09  C891.75,605.91 891.26,614.86 890.03,624.46  C888.84,633.74 886.82,648.76 886.22,653.36" fill="none" stroke="#303030" stroke-width="0.84" />
<path d="M878.37,513.14  C876.25,520.06 870.28,540.08 866.51,551.91  C862.93,563.15 859.27,574.03 856.17,582.99  C853.20,591.57 849.33,601.79 848.04,605.34" fill="none" stroke="#5a5a5a" stroke-width="0.91" />
<path d="M884.75,551.79  C883.14,555.97 878.44,568.12 875.51,575.72  C872.69,583.05 870.32,589.45 867.42,596.78  C864.63,603.83 860.00,615.16 858.59,618.62" fill="none" stroke="#4a4a4a" stroke-width="0.91" />
<path d="M919.74,558.95  C918.49,563.41 915.69,576.60 912.51,584.68  C909.43,592.47 904.36,598.87 901.29,606.49  C898.33,613.83 895.91,620.50 894.17,629.53  C892.50,638.26 891.43,654.53 890.91,659.27" fill="none" stroke="#2a2a2a" stroke-width="0.77" />
<path d="M826.89,546.47  C826.76,548.95 825.94,550.06 825.05,548.97  C824.16,547.87 823.53,544.98 823.64,542.49  C823.75,539.98 824.57,538.81 825.48,539.91  C826.38,541.02 827.01,543.96 826.89,546.47  Z" fill="none" stroke="#b8b8b8" stroke-width="1.33" />
<path d="M835.03,550.51  C834.89,552.58 834.19,553.52 833.46,552.63  C832.72,551.73 832.23,549.34 832.36,547.26  C832.48,545.17 833.18,544.19 833.92,545.09  C834.67,546.00 835.16,548.43 835.03,550.51  Z" fill="none" stroke="#7a7a7a" stroke-width="1.33" />
<path d="M822.28,558.09  C822.19,560.31 821.58,561.44 820.93,560.63  C820.28,559.82 819.83,557.38 819.91,555.15  C820.00,552.90 820.60,551.73 821.26,552.55  C821.92,553.37 822.38,555.85 822.28,558.09  Z" fill="none" stroke="#a8a8a8" stroke-width="1.33" />
<path d="M823.10,569.27  C823.02,571.15 822.26,571.79 821.41,570.72  C820.56,569.66 819.94,567.28 820.02,565.40  C820.09,563.50 820.84,562.82 821.70,563.89  C822.56,564.97 823.19,567.38 823.10,569.27  Z" fill="none" stroke="#8a8a8a" stroke-width="1.33" />
<path d="M846.47,536.00  C846.23,538.88 845.41,540.43 844.63,539.50  C843.85,538.57 843.39,535.50 843.61,532.61  C843.84,529.70 844.66,528.08 845.46,529.02  C846.25,529.97 846.71,533.10 846.47,536.00  Z" fill="none" stroke="#5e5e5e" stroke-width="1.33" />
<path d="M854.54,569.21  L862.81,579.23" fill="none" stroke="#3a3a3a" stroke-width="1.26" />
<path d="M853.48,579.70  L861.59,589.63" fill="none" stroke="#3a3a3a" stroke-width="1.26" />
<path d="M853.17,582.78  L861.23,592.67" fill="none" stroke="#3a3a3a" stroke-width="1.26" />
<path d="M852.76,586.82  L860.76,596.68" fill="none" stroke="#3a3a3a" stroke-width="1.26" />
<path d="M852.21,592.29  L860.12,602.09" fill="none" stroke="#3a3a3a" stroke-width="1.26" />
<path d="M851.71,597.16  L859.55,606.92" fill="none" stroke="#3a3a3a" stroke-width="1.26" />
<path d="M851.37,600.53  L859.16,610.25" fill="none" stroke="#3a3a3a" stroke-width="1.26" />
<path d="M850.99,604.32  L858.72,614.00" fill="none" stroke="#3a3a3a" stroke-width="1.26" />
<path d="M850.71,607.12  L858.39,616.78" fill="none" stroke="#3a3a3a" stroke-width="1.26" />
<path d="M821.05,447.75  C820.35,449.89 818.21,456.46 816.98,460.32  C815.76,464.12 814.62,467.43 813.67,470.80  C812.74,474.12 811.90,477.38 811.30,480.43  C810.71,483.45 810.50,484.06 810.09,489.09  C809.70,494.03 809.03,504.53 808.92,509.75  C808.80,514.89 808.95,515.24 809.36,520.67  C809.77,526.03 810.32,536.38 811.30,541.70  C812.27,546.97 814.99,550.97 815.24,552.91  C815.49,554.85 812.86,552.44 812.83,553.43  C812.80,554.41 815.20,557.77 815.06,558.78  C814.92,559.79 812.52,559.39 812.01,559.51" fill="none" stroke="#f0f0f0" stroke-width="1.68" />
<path d="M926.91,566.93  C925.94,570.12 924.24,579.38 921.31,585.54  C918.47,591.53 913.24,597.53 910.00,603.16  C906.87,608.62 903.66,613.69 901.99,619.02  C900.36,624.23 900.02,628.67 899.86,634.97  C899.70,641.15 900.45,649.87 900.92,656.29  C901.37,662.60 902.33,670.62 902.61,673.43" fill="none" stroke="#f0f0f0" stroke-width="1.68" />
<path d="M866.30,498.77  C866.13,502.61 865.38,515.06 865.34,521.18  C865.29,527.20 865.62,532.05 866.00,535.67  C866.37,539.26 866.85,542.19 867.56,543.02  C868.27,543.85 869.44,541.89 870.29,540.67  C871.14,539.44 871.73,538.36 872.66,535.65  C873.59,532.90 874.89,527.82 875.91,524.05  C876.95,520.21 878.33,514.77 878.82,512.87" fill="none" stroke="#f2f2f2" stroke-width="1.82" />
<path d="M898.23,550.91  C896.52,556.36 893.98,559.05 892.53,557.03  C891.08,555.02 891.21,549.01 892.86,543.50  C894.54,537.86 897.16,534.87 898.68,536.95  C900.20,539.03 899.99,545.33 898.23,550.91  Z" fill="none" stroke="#e6e6e6" stroke-width="1.68" />
<path d="M892.30,571.84  C891.07,575.73 888.96,577.25 887.56,575.29  C886.17,573.34 885.98,568.60 887.17,564.66  C888.37,560.65 890.52,558.97 891.96,560.97  C893.41,562.98 893.55,567.87 892.30,571.84  Z" fill="none" stroke="#e6e6e6" stroke-width="1.68" />
<path d="M886.46,585.64  C885.08,590.07 883.18,592.47 882.19,591.07  C881.21,589.68 881.49,584.99 882.83,580.51  C884.20,575.95 886.16,573.35 887.18,574.79  C888.20,576.21 887.87,581.11 886.46,585.64  Z" fill="none" stroke="#e6e6e6" stroke-width="1.68" />
<path d="M880.32,598.66  C878.76,603.10 876.82,605.60 875.97,604.33  C875.13,603.07 875.66,598.49 877.19,594.02  C878.76,589.44 880.77,586.72 881.65,588.02  C882.53,589.33 881.93,594.13 880.32,598.66  Z" fill="none" stroke="#e6e6e6" stroke-width="1.68" />
<path d="M873.77,609.75  C872.31,613.40 870.45,615.24 869.61,613.92  C868.76,612.60 869.21,608.58 870.64,604.89  C872.10,601.12 874.01,599.12 874.89,600.48  C875.77,601.84 875.26,606.02 873.77,609.75  Z" fill="none" stroke="#e6e6e6" stroke-width="1.68" />
<path d="M869.06,619.76  C867.39,623.40 865.21,624.90 864.15,623.17  C863.10,621.46 863.53,617.13 865.15,613.43  C866.81,609.66 869.06,607.98 870.17,609.76  C871.27,611.53 870.75,616.05 869.06,619.76  Z" fill="none" stroke="#e6e6e6" stroke-width="1.68" /></g><path d="M758.90,524.00 L954.70,474.30 L928.60,587.30 L760.30,637.50Z" fill="#000"/><g clip-path="url(#cpB)"><path d="M766.80,532.27  C767.04,539.48 767.87,561.56 768.21,573.53  C768.54,585.11 768.64,593.63 768.85,603.86  C769.05,613.78 769.33,629.08 769.43,633.89" fill="none" stroke="#333" stroke-width="0.84" />
<path d="M945.07,486.30  C943.07,493.59 936.79,516.04 933.57,528.20  C930.45,539.98 928.39,548.57 925.77,558.96  C923.22,569.07 919.32,584.67 918.09,589.60" fill="none" stroke="#3a3a3a" stroke-width="0.91" />
<path d="M774.91,564.74  C775.21,567.62 775.68,575.61 776.70,581.64  C777.70,587.56 778.95,595.92 780.87,600.42  C782.76,604.84 785.68,607.31 788.09,608.81  C790.48,610.29 792.88,610.98 795.36,609.49  C797.83,607.99 801.76,601.41 803.05,599.78" fill="none" stroke="#555" stroke-width="0.98" />
<path d="M874.28,534.11  C875.57,535.51 879.39,539.65 881.89,542.37  C884.37,545.05 888.95,546.29 889.23,550.33  C889.52,554.32 884.70,563.67 883.82,566.29" fill="none" stroke="#333" stroke-width="0.84" />
<path d="M886.62,530.78  C888.52,531.14 895.33,531.02 897.90,532.90  C900.44,534.75 901.14,538.76 902.00,541.85  C902.85,544.91 902.89,549.77 903.06,551.33" fill="none" stroke="#333" stroke-width="0.84" />
<path d="M808.28,592.57  C809.36,591.47 812.54,588.96 814.76,585.91  C816.98,582.85 818.89,577.40 821.67,574.14  C824.47,570.86 829.81,567.70 831.44,566.41" fill="none" stroke="#333" stroke-width="0.84" />
<path d="M835.52,555.08  C835.88,556.70 838.15,559.49 837.65,564.68  C837.16,569.80 834.32,578.75 832.69,585.59  C831.10,592.31 828.76,602.18 827.99,605.41" fill="none" stroke="#333" stroke-width="0.84" />
<path d="M863.27,558.54  C861.37,573.01 857.26,585.07 854.02,586.01  C850.77,586.94 849.43,576.40 851.09,561.94  C852.83,546.86 857.13,533.42 860.62,532.48  C864.10,531.55 865.26,543.47 863.27,558.54  Z" fill="none" stroke="#4e4e4e" stroke-width="1.05" />
<path d="M929.06,518.30  C928.75,521.96 928.93,532.77 927.26,539.75  C925.61,546.59 922.66,555.02 919.24,559.91  C915.85,564.77 910.51,568.04 906.68,569.44  C902.85,570.85 897.89,568.55 896.12,568.37" fill="none" stroke="#5e5e5e" stroke-width="1.05" />
<path d="M798.15,614.17  C797.26,611.77 795.49,608.83 795.51,605.72  C795.53,602.58 797.04,598.19 798.38,595.41  C799.74,592.61 801.34,591.18 803.59,589.08  C805.85,586.98 808.99,583.80 811.91,582.81  C814.83,581.83 818.97,581.88 820.99,583.17  C822.99,584.45 823.23,587.74 824.01,590.45  C824.77,593.13 825.81,595.93 825.63,599.29  C825.45,602.62 824.68,607.13 822.97,610.46  C821.27,613.77 818.12,617.34 815.40,619.32  C812.68,621.30 808.97,622.25 806.55,622.39  C804.12,622.53 802.23,621.48 800.83,620.12  C799.43,618.75 799.04,616.55 798.15,614.17  Z" fill="none" stroke="#7a7a7a" stroke-width="1.12" />
<path d="M875.46,573.36  C876.24,569.38 876.66,566.66 877.98,564.14  C879.32,561.61 881.51,559.63 883.41,558.29  C885.32,556.94 887.08,556.53 889.40,556.12  C891.71,555.72 895.41,554.76 897.26,555.84  C899.10,556.91 900.27,559.50 900.45,562.49  C900.63,565.46 899.49,569.69 898.40,573.64  C897.33,577.55 895.58,582.72 894.01,586.03  C892.45,589.32 891.03,591.83 888.97,593.59  C886.91,595.34 883.85,596.25 881.57,596.64  C879.29,597.02 876.66,597.37 875.28,595.91  C873.89,594.43 873.27,591.38 873.29,587.68  C873.31,583.93 874.68,577.29 875.46,573.36  Z" fill="none" stroke="#7a7a7a" stroke-width="1.12" />
<path d="M841.81,570.95  C839.32,583.69 838.45,597.84 835.66,614.16" fill="none" stroke="#9a9a9a" stroke-width="1.12" />
<path d="M864.21,564.65  C863.73,576.71 861.21,591.20 860.19,606.85" fill="none" stroke="#9a9a9a" stroke-width="1.12" />
<path d="M841.13,577.45  L863.34,571.15" fill="none" stroke="#555" stroke-width="1.54" />
<path d="M839.53,592.96  L861.26,586.66" fill="none" stroke="#555" stroke-width="1.54" />
<path d="M839.14,596.73  L860.76,590.43" fill="none" stroke="#555" stroke-width="1.54" />
<path d="M838.09,606.89  L859.39,600.60" fill="none" stroke="#555" stroke-width="1.54" />
<path d="M837.62,611.41  L858.79,605.12" fill="none" stroke="#555" stroke-width="1.54" />
<path d="M853.78,533.24  C854.91,544.59 857.06,551.73 853.36,567.71" fill="none" stroke="#5a5a5a" stroke-width="0.98" />
<path d="M750.82,535.18  C751.14,538.69 752.21,549.56 752.70,555.74  C753.17,561.81 753.56,566.70 753.73,572.12  C753.89,577.46 753.73,580.16 753.72,588.03  C753.72,595.73 753.79,609.38 753.71,617.84  C753.62,626.08 753.31,635.32 753.24,638.71" fill="none" stroke="#f2f2f2" stroke-width="1.54" />
<path d="M772.95,557.62  C773.75,555.92 775.71,550.85 777.79,547.39  C779.88,543.90 782.45,539.94 785.47,536.80  C788.49,533.65 791.98,530.85 795.91,528.57  C799.84,526.28 804.53,524.54 808.97,523.15  C813.40,521.76 818.12,520.68 822.45,520.24  C826.76,519.80 832.80,520.44 834.85,520.47" fill="none" stroke="#e2e2e2" stroke-width="3.50" />
<path d="M835.41,521.47  L838.47,512.62" fill="none" stroke="#d8d8d8" stroke-width="2.10" />
<path d="M867.23,514.30  C870.29,513.03 879.35,509.27 885.54,506.73  C891.73,504.18 901.24,500.32 904.36,499.04" fill="none" stroke="#a0a0a0" stroke-width="3.50" />
<path d="M867.30,513.72  L863.95,532.66" fill="none" stroke="#b0b0b0" stroke-width="2.10" />
<path d="M863.37,533.88  C864.69,532.17 866.47,526.90 871.36,523.52  C876.25,520.14 885.67,516.16 892.61,513.72  C899.52,511.29 907.06,509.76 912.75,508.95  C918.41,508.14 923.38,507.59 926.68,508.85  C929.94,510.09 931.54,515.11 932.50,516.34" fill="none" stroke="#e4e4e4" stroke-width="3.22" />
<path d="M859.29,520.56  C858.65,525.90 856.72,530.56 854.96,531.03  C853.20,531.50 852.25,527.60 852.84,522.25  C853.45,516.83 855.41,512.00 857.21,511.53  C859.01,511.06 859.94,515.14 859.29,520.56  Z" fill="none" stroke="#d0d0d0" stroke-width="1.54" />
<path d="M936.18,504.63  C935.56,513.70 934.12,521.24 932.96,521.69  C931.81,522.14 931.33,515.33 931.90,506.29  C932.49,497.00 933.96,488.92 935.17,488.46  C936.38,488.00 936.82,495.34 936.18,504.63  Z" fill="none" stroke="#d2d2d2" stroke-width="1.40" />
<path d="M775.75,546.89  C775.05,556.66 773.45,564.63 772.15,564.92  C770.86,565.22 770.32,557.72 770.96,547.96  C771.62,537.93 773.27,529.37 774.62,529.08  C775.97,528.79 776.47,536.88 775.75,546.89  Z" fill="none" stroke="#c6c6c6" stroke-width="1.40" />
<path d="M931.92,539.89  C931.33,542.57 930.09,544.94 929.14,545.21  C928.20,545.47 927.90,543.53 928.48,540.85  C929.06,538.16 930.31,535.74 931.27,535.48  C932.23,535.21 932.51,537.20 931.92,539.89  Z" fill="none" stroke="#9a9a9a" stroke-width="1.26" />
<path d="M775.05,584.15  C775.02,586.69 774.14,588.98 773.07,589.28  C771.99,589.58 771.14,587.78 771.15,585.24  C771.16,582.68 772.04,580.35 773.13,580.05  C774.22,579.75 775.07,581.59 775.05,584.15  Z" fill="none" stroke="#9a9a9a" stroke-width="1.26" /></g><path d="M760.30,584.00 L942.40,527.50 L1008.90,595.00 L813.70,679.40Z" fill="#000"/><g clip-path="url(#cpRF)"><path d="M916.41,509.36  C914.28,508.80 908.29,507.24 903.66,506.01  C899.04,504.77 894.26,502.68 888.70,501.95  C883.13,501.21 877.40,500.84 870.07,501.56  C862.66,502.29 852.32,504.56 844.01,506.39  C835.58,508.26 827.64,510.42 819.84,512.73  C811.90,515.08 803.45,517.63 796.79,520.44  C790.01,523.31 784.60,526.27 779.70,529.84  C774.70,533.48 770.20,537.62 767.19,542.18  C764.12,546.84 762.19,552.86 761.69,557.61  C761.19,562.47 762.57,565.78 764.48,570.78  C766.42,575.87 769.74,582.99 773.44,588.07  C777.21,593.24 781.43,597.73 786.87,601.24  C792.35,604.79 799.41,607.37 806.09,609.01  C812.78,610.66 819.58,610.93 826.73,611.04  C833.85,611.15 841.87,610.32 848.73,609.69  C855.55,609.07 861.48,609.38 867.79,607.32  C874.02,605.27 879.65,600.13 886.07,597.59  C892.39,595.10 900.24,594.55 906.12,592.09  C911.93,589.67 916.71,586.63 921.13,583.08  C925.47,579.60 929.16,575.52 932.42,571.14  C935.61,566.84 938.86,561.58 940.53,557.18  C942.17,552.87 942.79,548.60 942.55,544.89  C942.31,541.25 939.76,536.62 939.21,535.00" fill="none" stroke="#444" stroke-width="0.84" />
<path d="M916.00,514.23  C914.13,513.57 908.94,511.51 904.84,510.32  C900.76,509.14 896.69,507.95 891.45,507.10  C886.21,506.25 879.73,505.13 873.32,505.19  C866.87,505.25 859.75,506.18 852.65,507.53  C845.46,508.90 834.04,512.48 830.23,513.49" fill="none" stroke="#333" stroke-width="0.70" />
<path d="M925.69,521.13  C927.07,522.80 931.45,527.82 934.10,531.33  C936.79,534.89 939.95,538.82 941.70,542.38  C943.47,545.99 944.06,551.04 944.54,552.82" fill="none" stroke="#444" stroke-width="0.77" />
<path d="M830.06,553.02  C833.66,557.02 837.13,557.71 840.68,560.63  C844.27,563.58 849.77,567.53 851.56,570.70  C853.38,573.90 852.62,576.77 851.30,579.76  C849.96,582.78 847.00,586.15 843.43,588.75  C839.82,591.38 834.88,593.98 829.65,595.37  C824.37,596.78 817.56,597.34 812.01,597.03  C806.45,596.72 801.37,595.94 796.52,593.48  C791.71,591.03 786.61,586.54 783.24,582.49  C779.91,578.50 777.76,574.16 776.36,569.52  C774.99,564.96 773.31,559.59 774.79,555.03  C776.24,550.55 780.28,545.96 784.80,542.37  C789.23,538.85 795.74,534.36 801.46,533.54  C807.14,532.72 814.78,534.07 819.47,537.22  C824.22,540.40 826.51,549.08 830.06,553.02  Z" fill="none" stroke="#333" stroke-width="0.77" />
<path d="M770.75,548.50  C773.75,546.30 781.32,539.31 788.26,535.67  C795.04,532.09 805.57,527.95 811.76,526.66  C817.89,525.39 821.77,525.98 825.86,527.74  C829.97,529.52 834.17,534.28 836.61,537.48  C839.09,540.72 839.84,545.43 840.50,547.05" fill="none" stroke="#262626" stroke-width="0.77" />
<path d="M921.94,512.01  C919.53,511.17 912.26,508.50 907.59,506.98  C902.94,505.46 899.93,504.29 893.98,502.90  C888.03,501.51 879.14,499.44 871.85,498.62  C864.54,497.79 856.92,497.72 850.00,497.96  C843.04,498.21 836.33,499.25 830.11,500.12  C823.83,500.99 818.36,501.67 812.52,503.21  C806.60,504.76 800.23,506.78 794.69,509.48  C789.05,512.24 783.69,515.82 778.93,519.75  C774.07,523.76 769.61,528.78 765.84,533.46  C761.98,538.27 758.66,543.00 756.15,548.24  C753.58,553.61 751.70,560.23 750.73,565.39  C749.75,570.68 749.87,574.93 750.53,579.28  C751.21,583.72 752.38,587.04 754.86,591.64  C757.37,596.31 760.39,602.46 765.68,607.18  C771.05,611.97 779.22,616.53 786.89,619.99  C794.62,623.47 802.89,626.10 811.66,627.84  C820.45,629.58 830.17,630.72 839.28,630.37  C848.32,630.02 858.62,628.19 865.76,625.84  C872.81,623.51 877.76,619.86 881.93,616.46  C886.02,613.13 888.18,608.22 890.70,605.71  C893.20,603.23 893.89,602.51 897.14,601.30  C900.37,600.09 904.01,599.72 910.07,598.42  C916.08,597.13 925.79,597.13 933.09,593.58  C940.25,590.10 948.59,582.85 953.00,577.88  C957.29,573.04 958.51,568.45 959.77,563.98  C960.99,559.60 960.49,553.33 960.63,551.26" fill="none" stroke="#ffffff" stroke-width="1.68" />
<path d="M856.75,513.48  C858.68,515.75 856.11,518.76 850.96,520.19  C845.75,521.65 839.96,520.92 838.09,518.58  C836.24,516.26 838.97,513.26 844.13,511.88  C849.23,510.51 854.85,511.23 856.75,513.48  Z" fill="none" stroke="#f4f4f4" stroke-width="1.82" />
<path d="M838.94,513.50  C838.71,514.04 837.43,515.64 837.56,516.71  C837.69,517.79 838.57,519.15 839.75,519.95  C840.93,520.76 842.96,521.37 844.62,521.52  C846.28,521.67 848.83,520.96 849.67,520.85" fill="none" stroke="#ffffff" stroke-width="2.94" />
<path d="M878.78,511.45  C880.50,513.37 879.93,515.49 877.49,516.18  C875.03,516.87 871.65,515.85 869.95,513.90  C868.27,511.97 868.89,509.88 871.33,509.21  C873.75,508.55 877.08,509.55 878.78,511.45  Z" fill="#e6e6e6" stroke="none" stroke-width="0.70" />
<path d="M878.74,510.39  C879.59,510.50 882.54,510.70 883.88,511.06  C885.21,511.43 886.37,512.01 886.79,512.60  C887.20,513.20 886.42,514.29 886.35,514.63" fill="none" stroke="#c0c0c0" stroke-width="1.40" />
<path d="M894.67,522.96  C894.24,522.34 892.30,520.35 892.09,519.27  C891.87,518.19 892.55,516.98 893.35,516.47  C894.15,515.96 895.56,515.92 896.87,516.18  C898.19,516.44 900.23,517.35 901.27,518.06  C902.31,518.77 902.81,520.05 903.12,520.46  Z" fill="#dadada" stroke="none" stroke-width="0.70" />
<path d="M895.13,524.32  C896.04,524.47 898.99,525.43 900.59,525.21  C902.18,524.98 904.01,523.34 904.69,522.97" fill="none" stroke="#777" stroke-width="0.84" />
<path d="M861.24,549.73  C862.46,551.26 861.55,553.13 859.20,553.87  C856.83,554.63 853.91,553.97 852.70,552.41  C851.51,550.86 852.46,549.01 854.81,548.28  C857.16,547.56 860.03,548.20 861.24,549.73  Z" fill="none" stroke="#b0b0b0" stroke-width="1.19" />
<path d="M859.60,541.14  C860.49,542.23 860.43,543.37 859.46,543.67  C858.48,543.97 856.98,543.31 856.10,542.20  C855.22,541.10 855.30,539.97 856.27,539.68  C857.23,539.39 858.72,540.04 859.60,541.14  Z" fill="none" stroke="#8a8a8a" stroke-width="0.84" />
<path d="M844.29,548.65  C845.24,549.89 845.07,551.19 843.91,551.55  C842.74,551.92 841.03,551.19 840.09,549.94  C839.15,548.70 839.34,547.41 840.50,547.05  C841.66,546.70 843.35,547.42 844.29,548.65  Z" fill="none" stroke="#5a5a5a" stroke-width="0.77" />
<path d="M861.16,574.31  C859.90,573.39 855.57,570.74 853.68,568.83  C851.81,566.93 850.00,564.62 849.85,562.91  C849.70,561.21 851.45,559.65 852.75,558.58  C854.03,557.51 855.83,557.01 857.57,556.45  C859.31,555.90 861.11,555.25 863.20,555.23  C865.28,555.21 868.17,555.25 870.11,556.34  C872.06,557.42 873.70,559.73 874.92,561.78  C876.14,563.86 877.00,567.59 877.43,568.77" fill="none" stroke="#d2d2d2" stroke-width="1.40" />
<path d="M860.41,573.32  C859.94,574.10 858.48,576.58 857.59,578.04  C856.69,579.51 854.61,580.86 855.06,582.10  C855.51,583.34 858.01,584.84 860.32,585.44  C862.63,586.05 866.66,586.25 868.86,585.69  C871.05,585.12 872.72,582.69 873.48,582.09" fill="none" stroke="#bdbdbd" stroke-width="1.68" />
<path d="M877.36,567.57  C878.55,567.78 882.30,568.43 884.51,568.80  C886.71,569.17 889.45,568.94 890.58,569.78  C891.71,570.63 891.76,572.48 891.30,573.90  C890.83,575.32 889.28,577.46 887.74,578.33  C886.19,579.20 882.99,578.94 882.03,579.07" fill="none" stroke="#b5b5b5" stroke-width="1.68" />
<path d="M858.38,581.59  L862.67,576.30  L870.04,578.81  L872.82,583.63  L865.88,585.43  Z" fill="#b4b4b4" stroke="none" stroke-width="0.70" />
<path d="M888.92,570.98  L880.36,570.22  L879.28,575.59  L883.53,579.82  L889.43,577.09  Z" fill="#b0b0b0" stroke="none" stroke-width="0.70" />
<path d="M878.18,572.83  C879.94,575.06 879.11,577.67 876.28,578.66  C873.45,579.66 869.72,578.62 867.98,576.36  C866.25,574.11 867.16,571.53 869.97,570.57  C872.77,569.62 876.43,570.63 878.18,572.83  Z" fill="none" stroke="#f8f8f8" stroke-width="1.82" />
<path d="M873.81,581.33  C877.28,584.65 881.52,587.74 884.85,591.54  L890.65,589.40  C887.59,585.53 884.42,582.09 883.04,578.07  Z" fill="#d8d8d8" stroke="none" stroke-width="0.70" />
<path d="M880.03,581.71  L885.65,588.90" fill="none" stroke="#3a3a3a" stroke-width="1.26" />
<path d="M899.30,551.71  C904.27,556.34 904.33,561.96 899.28,564.20  C894.17,566.48 885.91,564.38 880.98,559.56  C876.13,554.83 876.43,549.33 881.50,547.24  C886.50,545.17 894.42,547.15 899.30,551.71  Z" fill="none" stroke="#9a9a9a" stroke-width="1.05" />
<path d="M896.52,552.91  C900.03,556.20 900.43,559.98 897.36,561.33  C894.28,562.69 888.90,561.05 885.41,557.68  C881.96,554.35 881.71,550.64 884.79,549.36  C887.84,548.09 893.06,549.67 896.52,552.91  Z" fill="none" stroke="#3a3a3a" stroke-width="0.77" />
<path d="M890.87,542.93  C890.00,540.04 890.19,537.47 892.44,535.44  C894.66,533.44 899.81,531.51 904.13,530.79  C908.42,530.07 913.87,529.51 918.41,531.05  C922.97,532.59 928.36,536.91 931.72,540.17  C935.11,543.47 938.06,547.54 938.60,550.80  C939.15,554.11 937.30,557.52 934.75,559.81  C932.16,562.14 927.40,564.13 923.12,564.53  C918.82,564.93 913.40,564.09 909.16,562.13  C904.93,560.19 900.95,556.23 897.90,553.00  C894.88,549.81 891.75,545.86 890.87,542.93  Z" fill="none" stroke="#555" stroke-width="0.84" />
<path d="M894.54,567.18  C897.08,568.14 904.34,571.60 909.87,572.98  C915.41,574.36 922.21,575.51 927.64,575.44  C933.05,575.37 939.85,573.06 942.26,572.60" fill="none" stroke="#383838" stroke-width="0.77" />
<path d="M924.95,568.51  C928.00,564.33 930.99,559.33 934.02,555.01" fill="none" stroke="#e6e6e6" stroke-width="2.24" />
<path d="M813.66,600.86  C820.54,601.51 827.01,602.30 833.86,602.95" fill="none" stroke="#e2e2e2" stroke-width="2.24" />
<path d="M929.92,531.93  C932.94,535.07 934.59,537.91 933.57,538.25  C932.55,538.58 929.25,536.26 926.24,533.10  C923.27,529.98 921.71,527.22 922.72,526.91  C923.72,526.60 926.93,528.83 929.92,531.93  Z" fill="none" stroke="#c6c6c6" stroke-width="1.33" />
<path d="M779.67,581.26  C781.93,585.04 782.76,588.49 781.48,588.91  C780.19,589.33 777.31,586.54 775.07,582.73  C772.85,578.97 772.11,575.64 773.37,575.25  C774.63,574.85 777.44,577.53 779.67,581.26  Z" fill="none" stroke="#b8b8b8" stroke-width="1.33" />
<path d="M776.43,640.38  C785.93,638.17 810.86,631.91 831.52,627.55  C851.58,623.31 877.92,621.90 897.61,614.71  C916.52,607.80 933.73,594.82 946.48,586.83  C958.69,579.17 969.95,570.07 974.40,566.89" fill="none" stroke="#6a6a6a" stroke-width="0.91" />
<path d="M786.11,658.50  Q934.19,662.33 989.54,582.30" fill="none" stroke="#e8e8e8" stroke-width="1.47" />
<path d="M788.15,662.32  Q937.04,666.03 992.19,585.00" fill="none" stroke="#9a9a9a" stroke-width="1.54" stroke-dasharray="2,1.6"/>
<path d="M790.03,665.84  Q939.66,669.44 994.63,587.47" fill="none" stroke="#d4d4d4" stroke-width="1.12" />
<path d="M796.58,678.11  Q948.49,680.95 1003.06,596.06" fill="none" stroke="#e0e0e0" stroke-width="1.47" />
<path d="M798.76,682.18  Q951.51,684.88 1005.85,598.89" fill="none" stroke="#9a9a9a" stroke-width="1.54" stroke-dasharray="2,1.6"/></g><path d="M866.30,497.80 L935.60,573.50 L919.00,638.00 L862.00,557.50Z" fill="#000"/><g clip-path="url(#cpGF)"><path d="M827.69,456.03  C827.06,460.56 825.18,472.85 824.03,482.14  C822.92,491.13 821.72,501.18 820.90,510.56  C820.11,519.65 819.56,527.85 819.14,537.65  C818.73,547.13 818.50,563.18 818.38,568.03" fill="none" stroke="#3a3a3a" stroke-width="0.84" />
<path d="M858.94,496.53  C857.01,493.84 850.62,484.75 847.43,480.52  C844.25,476.31 841.98,472.39 839.78,471.14  C837.59,469.91 835.98,470.54 834.29,472.98  C832.62,475.39 831.26,480.76 829.74,485.35  C828.26,489.85 826.55,495.38 825.31,500.10  C824.10,504.73 822.96,510.04 822.35,513.52  C821.76,516.95 821.43,518.76 821.66,521.12  C821.89,523.47 822.21,525.04 823.71,527.73  C825.21,530.43 829.53,535.75 830.70,537.36" fill="none" stroke="#555" stroke-width="1.05" />
<path d="M839.69,472.53  C841.32,474.36 846.32,479.77 849.53,483.65  C852.77,487.55 857.42,493.81 859.01,495.86" fill="none" stroke="#707070" stroke-width="1.82" />
<path d="M852.88,499.96  C851.74,501.31 847.80,504.24 846.23,507.87  C844.69,511.44 843.94,516.50 843.42,521.41  C842.92,526.23 842.64,531.78 843.10,537.05  C843.55,542.26 845.20,548.34 846.10,552.97  C846.99,557.55 848.09,562.87 848.48,564.82" fill="none" stroke="#2e2e2e" stroke-width="0.84" />
<path d="M861.69,493.58  C861.04,498.41 858.86,511.38 857.95,521.45  C857.06,531.19 856.77,542.61 856.21,552.69  C855.67,562.46 855.29,571.21 854.63,581.11  C853.99,590.69 852.74,606.07 852.38,610.80" fill="none" stroke="#3a3a3a" stroke-width="0.91" />
<path d="M882.62,517.15  C881.48,521.54 878.26,533.65 876.06,542.44  C873.94,550.94 871.73,560.30 869.68,568.77  C867.70,576.95 866.01,584.22 863.93,592.50  C861.92,600.48 858.51,613.30 857.49,617.23" fill="none" stroke="#333" stroke-width="0.91" />
<path d="M907.39,545.04  C906.17,549.48 902.75,561.74 900.37,570.61  C898.08,579.18 895.14,587.97 893.42,597.09  C891.75,605.91 891.26,614.86 890.03,624.46  C888.84,633.74 886.82,648.76 886.22,653.36" fill="none" stroke="#303030" stroke-width="0.84" />
<path d="M878.37,513.14  C876.25,520.06 870.28,540.08 866.51,551.91  C862.93,563.15 859.27,574.03 856.17,582.99  C853.20,591.57 849.33,601.79 848.04,605.34" fill="none" stroke="#5a5a5a" stroke-width="0.91" />
<path d="M884.75,551.79  C883.14,555.97 878.44,568.12 875.51,575.72  C872.69,583.05 870.32,589.45 867.42,596.78  C864.63,603.83 860.00,615.16 858.59,618.62" fill="none" stroke="#4a4a4a" stroke-width="0.91" />
<path d="M919.74,558.95  C918.49,563.41 915.69,576.60 912.51,584.68  C909.43,592.47 904.36,598.87 901.29,606.49  C898.33,613.83 895.91,620.50 894.17,629.53  C892.50,638.26 891.43,654.53 890.91,659.27" fill="none" stroke="#2a2a2a" stroke-width="0.77" />
<path d="M826.89,546.47  C826.76,548.95 825.94,550.06 825.05,548.97  C824.16,547.87 823.53,544.98 823.64,542.49  C823.75,539.98 824.57,538.81 825.48,539.91  C826.38,541.02 827.01,543.96 826.89,546.47  Z" fill="none" stroke="#b8b8b8" stroke-width="1.33" />
<path d="M835.03,550.51  C834.89,552.58 834.19,553.52 833.46,552.63  C832.72,551.73 832.23,549.34 832.36,547.26  C832.48,545.17 833.18,544.19 833.92,545.09  C834.67,546.00 835.16,548.43 835.03,550.51  Z" fill="none" stroke="#7a7a7a" stroke-width="1.33" />
<path d="M822.28,558.09  C822.19,560.31 821.58,561.44 820.93,560.63  C820.28,559.82 819.83,557.38 819.91,555.15  C820.00,552.90 820.60,551.73 821.26,552.55  C821.92,553.37 822.38,555.85 822.28,558.09  Z" fill="none" stroke="#a8a8a8" stroke-width="1.33" />
<path d="M823.10,569.27  C823.02,571.15 822.26,571.79 821.41,570.72  C820.56,569.66 819.94,567.28 820.02,565.40  C820.09,563.50 820.84,562.82 821.70,563.89  C822.56,564.97 823.19,567.38 823.10,569.27  Z" fill="none" stroke="#8a8a8a" stroke-width="1.33" />
<path d="M846.47,536.00  C846.23,538.88 845.41,540.43 844.63,539.50  C843.85,538.57 843.39,535.50 843.61,532.61  C843.84,529.70 844.66,528.08 845.46,529.02  C846.25,529.97 846.71,533.10 846.47,536.00  Z" fill="none" stroke="#5e5e5e" stroke-width="1.33" />
<path d="M854.54,569.21  L862.81,579.23" fill="none" stroke="#3a3a3a" stroke-width="1.26" />
<path d="M853.48,579.70  L861.59,589.63" fill="none" stroke="#3a3a3a" stroke-width="1.26" />
<path d="M853.17,582.78  L861.23,592.67" fill="none" stroke="#3a3a3a" stroke-width="1.26" />
<path d="M852.76,586.82  L860.76,596.68" fill="none" stroke="#3a3a3a" stroke-width="1.26" />
<path d="M852.21,592.29  L860.12,602.09" fill="none" stroke="#3a3a3a" stroke-width="1.26" />
<path d="M851.71,597.16  L859.55,606.92" fill="none" stroke="#3a3a3a" stroke-width="1.26" />
<path d="M851.37,600.53  L859.16,610.25" fill="none" stroke="#3a3a3a" stroke-width="1.26" />
<path d="M850.99,604.32  L858.72,614.00" fill="none" stroke="#3a3a3a" stroke-width="1.26" />
<path d="M850.71,607.12  L858.39,616.78" fill="none" stroke="#3a3a3a" stroke-width="1.26" />
<path d="M821.05,447.75  C820.35,449.89 818.21,456.46 816.98,460.32  C815.76,464.12 814.62,467.43 813.67,470.80  C812.74,474.12 811.90,477.38 811.30,480.43  C810.71,483.45 810.50,484.06 810.09,489.09  C809.70,494.03 809.03,504.53 808.92,509.75  C808.80,514.89 808.95,515.24 809.36,520.67  C809.77,526.03 810.32,536.38 811.30,541.70  C812.27,546.97 814.99,550.97 815.24,552.91  C815.49,554.85 812.86,552.44 812.83,553.43  C812.80,554.41 815.20,557.77 815.06,558.78  C814.92,559.79 812.52,559.39 812.01,559.51" fill="none" stroke="#f0f0f0" stroke-width="1.68" />
<path d="M926.91,566.93  C925.94,570.12 924.24,579.38 921.31,585.54  C918.47,591.53 913.24,597.53 910.00,603.16  C906.87,608.62 903.66,613.69 901.99,619.02  C900.36,624.23 900.02,628.67 899.86,634.97  C899.70,641.15 900.45,649.87 900.92,656.29  C901.37,662.60 902.33,670.62 902.61,673.43" fill="none" stroke="#f0f0f0" stroke-width="1.68" />
<path d="M866.30,498.77  C866.13,502.61 865.38,515.06 865.34,521.18  C865.29,527.20 865.62,532.05 866.00,535.67  C866.37,539.26 866.85,542.19 867.56,543.02  C868.27,543.85 869.44,541.89 870.29,540.67  C871.14,539.44 871.73,538.36 872.66,535.65  C873.59,532.90 874.89,527.82 875.91,524.05  C876.95,520.21 878.33,514.77 878.82,512.87" fill="none" stroke="#f2f2f2" stroke-width="1.82" />
<path d="M898.23,550.91  C896.52,556.36 893.98,559.05 892.53,557.03  C891.08,555.02 891.21,549.01 892.86,543.50  C894.54,537.86 897.16,534.87 898.68,536.95  C900.20,539.03 899.99,545.33 898.23,550.91  Z" fill="none" stroke="#e6e6e6" stroke-width="1.68" />
<path d="M892.30,571.84  C891.07,575.73 888.96,577.25 887.56,575.29  C886.17,573.34 885.98,568.60 887.17,564.66  C888.37,560.65 890.52,558.97 891.96,560.97  C893.41,562.98 893.55,567.87 892.30,571.84  Z" fill="none" stroke="#e6e6e6" stroke-width="1.68" />
<path d="M886.46,585.64  C885.08,590.07 883.18,592.47 882.19,591.07  C881.21,589.68 881.49,584.99 882.83,580.51  C884.20,575.95 886.16,573.35 887.18,574.79  C888.20,576.21 887.87,581.11 886.46,585.64  Z" fill="none" stroke="#e6e6e6" stroke-width="1.68" />
<path d="M880.32,598.66  C878.76,603.10 876.82,605.60 875.97,604.33  C875.13,603.07 875.66,598.49 877.19,594.02  C878.76,589.44 880.77,586.72 881.65,588.02  C882.53,589.33 881.93,594.13 880.32,598.66  Z" fill="none" stroke="#e6e6e6" stroke-width="1.68" />
<path d="M873.77,609.75  C872.31,613.40 870.45,615.24 869.61,613.92  C868.76,612.60 869.21,608.58 870.64,604.89  C872.10,601.12 874.01,599.12 874.89,600.48  C875.77,601.84 875.26,606.02 873.77,609.75  Z" fill="none" stroke="#e6e6e6" stroke-width="1.68" />
<path d="M869.06,619.76  C867.39,623.40 865.21,624.90 864.15,623.17  C863.10,621.46 863.53,617.13 865.15,613.43  C866.81,609.66 869.06,607.98 870.17,609.76  C871.27,611.53 870.75,616.05 869.06,619.76  Z" fill="none" stroke="#e6e6e6" stroke-width="1.68" /></g><path d="M721.60,514.90 L813.00,493.40" fill="none" stroke="#d81a1a" stroke-width="1.7" stroke-linejoin="round"/><path d="M856.00,483.20 L889.20,474.70 L901.50,486.60" fill="none" stroke="#d81a1a" stroke-width="1.7" stroke-linejoin="round"/><path d="M942.40,527.50 L1008.90,595.00 L813.70,679.40 L721.60,514.90" fill="none" stroke="#d81a1a" stroke-width="1.7" stroke-linejoin="round"/><path d="M813.00,493.40 L815.10,438.20 L935.60,573.50 L908.90,681.90 L887.30,650.20" fill="none" stroke="#14b814" stroke-width="1.7" stroke-linejoin="round"/><path d="M942.40,527.50 L954.70,474.30 L758.90,524.00 L760.30,637.50 L785.00,631.00" fill="none" stroke="#1a1ad0" stroke-width="1.7" stroke-linejoin="round"/><text x="971.8" y="692.3" font-family="Liberation Sans" font-weight="bold" font-size="17.5" fill="#3d66ba" textLength="41.5" lengthAdjust="spacingAndGlyphs">mbi@</text><text x="972" y="707.9" font-family="Liberation Sans" font-weight="bold" font-size="17.5" fill="#3d66ba" textLength="41" lengthAdjust="spacingAndGlyphs">dkfz.</text></g></svg></div><!--/v4-->

<!-- thumbnail + hand -->
<svg class="a" style="left:0;top:0" width="1063" height="733" viewBox="0 0 1063 733">
  <rect x="286.8" y="409.5" width="94.6" height="74.2" fill="#fff" stroke="#e81c24" stroke-width="3" stroke-dasharray="3,4.2"/>
<!--thumb--><clipPath id="cpTh"><rect x="294.2" y="416" width="81.6" height="62"/></clipPath><rect x="294.2" y="416" width="81.6" height="62" fill="#050505"/><g clip-path="url(#cpTh)"><path d="M297.85,414.79  C297.49,417.35 296.36,424.61 295.70,430.14  C295.05,435.68 294.33,442.05 293.91,448.00  C293.49,453.95 293.26,459.37 293.20,465.86  C293.14,472.35 293.49,483.42 293.56,486.93" fill="none" stroke="#3a3a3a" stroke-width="0.72" />
<path d="M324.33,417.29  C322.72,417.05 317.36,416.15 314.67,415.86  C311.99,415.56 310.02,414.90 308.23,415.50  C306.44,416.10 305.19,417.29 303.93,419.43  C302.68,421.57 301.79,425.08 300.71,428.36  C299.64,431.63 298.39,435.68 297.49,439.07  C296.60,442.46 295.76,446.27 295.35,448.71  C294.93,451.15 294.69,452.46 294.99,453.71  C295.28,454.96 295.64,455.68 297.13,456.21  C298.63,456.75 302.80,456.81 303.93,456.93" fill="none" stroke="#555" stroke-width="0.90" />
<path d="M308.23,416.21  C309.60,416.21 313.78,416.10 316.46,416.21  C319.15,416.33 323.02,416.81 324.33,416.93" fill="none" stroke="#707070" stroke-width="1.56" />
<path d="M320.04,422.29  C319.26,423.60 316.40,427.35 315.39,430.14  C314.37,432.94 314.07,436.10 313.96,439.07  C313.84,442.05 313.96,445.32 314.67,448.00  C315.39,450.68 317.18,453.06 318.25,455.14  C319.32,457.22 320.64,459.61 321.11,460.50" fill="none" stroke="#2e2e2e" stroke-width="0.72" />
<path d="M326.12,414.43  C326.01,417.05 325.35,424.55 325.41,430.14  C325.47,435.74 326.12,442.05 326.48,448.00  C326.84,453.95 327.26,459.37 327.56,465.86  C327.85,472.35 328.15,483.42 328.27,486.93" fill="none" stroke="#3a3a3a" stroke-width="0.78" />
<path d="M342.59,414.43  C342.23,417.05 341.16,424.55 340.44,430.14  C339.72,435.74 339.01,442.05 338.29,448.00  C337.58,453.95 336.98,459.37 336.15,465.86  C335.31,472.35 333.76,483.42 333.28,486.93" fill="none" stroke="#333" stroke-width="0.78" />
<path d="M361.20,414.43  C360.96,417.05 360.24,424.55 359.77,430.14  C359.29,435.74 358.40,442.05 358.33,448.00  C358.27,453.95 359.05,459.37 359.41,465.86  C359.77,472.35 360.30,483.42 360.48,486.93" fill="none" stroke="#303030" stroke-width="0.72" />
<path d="M339.37,414.79  C338.53,419.13 336.08,432.35 334.36,440.86  C332.63,449.37 330.72,458.18 328.99,465.86  C327.26,473.54 324.81,483.42 323.98,486.93" fill="none" stroke="#5a5a5a" stroke-width="0.78" />
<path d="M347.38,429.79  C346.70,432.82 344.65,441.99 343.30,448.00  C341.96,454.01 340.82,459.37 339.33,465.86  C337.84,472.35 335.19,483.42 334.36,486.93" fill="none" stroke="#4a4a4a" stroke-width="0.78" />
<path d="M370.15,414.43  C369.97,417.05 369.97,424.55 369.07,430.14  C368.18,435.74 365.79,442.05 364.78,448.00  C363.76,453.95 362.99,459.37 362.99,465.86  C362.99,472.35 364.48,483.42 364.78,486.93" fill="none" stroke="#2a2a2a" stroke-width="0.66" />
<path d="M300.89,465.43  C300.89,467.10 300.17,468.46 299.28,468.46  C298.39,468.46 297.67,467.10 297.67,465.43  C297.67,463.75 298.39,462.39 299.28,462.39  C300.17,462.39 300.89,463.75 300.89,465.43  Z" fill="none" stroke="#b8b8b8" stroke-width="1.14" />
<path d="M308.52,461.75  C308.52,463.13 307.94,464.25 307.23,464.25  C306.52,464.25 305.94,463.13 305.94,461.75  C305.94,460.37 306.52,459.25 307.23,459.25  C307.94,459.25 308.52,460.37 308.52,461.75  Z" fill="none" stroke="#7a7a7a" stroke-width="1.14" />
<path d="M297.03,476.71  C297.03,478.29 296.48,479.57 295.81,479.57  C295.14,479.57 294.59,478.29 294.59,476.71  C294.59,475.14 295.14,473.86 295.81,473.86  C296.48,473.86 297.03,475.14 297.03,476.71  Z" fill="none" stroke="#a8a8a8" stroke-width="1.14" />
<path d="M298.32,483.64  C298.32,485.02 297.60,486.14 296.71,486.14  C295.81,486.14 295.09,485.02 295.09,483.64  C295.09,482.26 295.81,481.14 296.71,481.14  C297.60,481.14 298.32,482.26 298.32,483.64  Z" fill="none" stroke="#8a8a8a" stroke-width="1.14" />
<path d="M317.39,445.14  C317.39,446.92 316.82,448.36 316.10,448.36  C315.39,448.36 314.81,446.92 314.81,445.14  C314.81,443.37 315.39,441.93 316.10,441.93  C316.82,441.93 317.39,443.37 317.39,445.14  Z" fill="none" stroke="#5e5e5e" stroke-width="1.14" />
<path d="M326.48,458.71  L334.00,458.71" fill="none" stroke="#3a3a3a" stroke-width="1.08" />
<path d="M326.48,465.86  L334.00,465.86" fill="none" stroke="#3a3a3a" stroke-width="1.08" />
<path d="M326.48,468.00  L334.00,468.00" fill="none" stroke="#3a3a3a" stroke-width="1.08" />
<path d="M326.48,470.86  L334.00,470.86" fill="none" stroke="#3a3a3a" stroke-width="1.08" />
<path d="M326.48,474.79  L334.00,474.79" fill="none" stroke="#3a3a3a" stroke-width="1.08" />
<path d="M326.48,478.36  L334.00,478.36" fill="none" stroke="#3a3a3a" stroke-width="1.08" />
<path d="M326.48,480.86  L334.00,480.86" fill="none" stroke="#3a3a3a" stroke-width="1.08" />
<path d="M326.48,483.71  L334.00,483.71" fill="none" stroke="#3a3a3a" stroke-width="1.08" />
<path d="M326.48,485.86  L334.00,485.86" fill="none" stroke="#3a3a3a" stroke-width="1.08" />
<path d="M292.05,414.39  C291.53,415.83 289.88,420.31 288.90,423.00  C287.93,425.69 287.00,428.12 286.22,430.50  C285.44,432.88 284.74,435.20 284.25,437.29  C283.76,439.37 283.57,439.86 283.28,443.00  C283.00,446.14 282.55,452.87 282.53,456.14  C282.51,459.42 282.67,459.52 283.18,462.64  C283.69,465.76 284.46,472.11 285.57,474.86  C286.69,477.61 289.56,478.02 289.87,479.14  C290.18,480.26 287.44,480.87 287.44,481.57  C287.44,482.27 289.98,482.52 289.87,483.36  C289.75,484.19 287.27,486.04 286.76,486.57" fill="none" stroke="#f0f0f0" stroke-width="1.44" />
<path d="M375.23,414.39  C375.09,416.28 375.32,421.31 374.44,425.71  C373.56,430.12 371.19,436.04 369.93,440.82  C368.67,445.60 367.27,450.37 366.89,454.39  C366.51,458.42 366.88,461.19 367.64,464.96  C368.40,468.74 370.17,473.44 371.43,477.04  C372.70,480.64 374.59,484.98 375.23,486.57" fill="none" stroke="#f0f0f0" stroke-width="1.44" />
<path d="M329.81,414.43  C329.99,416.31 330.43,422.68 330.88,425.71  C331.34,428.75 331.99,431.01 332.57,432.64  C333.15,434.27 333.76,435.50 334.36,435.50  C334.95,435.50 335.64,433.77 336.15,432.64  C336.65,431.51 336.98,430.62 337.40,428.71  C337.82,426.81 338.27,423.60 338.65,421.21  C339.03,418.83 339.48,415.56 339.65,414.43" fill="none" stroke="#f2f2f2" stroke-width="1.56" />
<path d="M356.17,421.87  C355.67,425.39 354.32,428.10 353.14,427.94  C351.97,427.77 351.42,424.79 351.91,421.27  C352.41,417.76 353.76,415.04 354.94,415.21  C356.11,415.37 356.66,418.35 356.17,421.87  Z" fill="none" stroke="#e6e6e6" stroke-width="1.44" />
<path d="M354.63,435.44  C354.24,438.17 352.98,440.26 351.80,440.09  C350.63,439.93 349.99,437.58 350.38,434.84  C350.76,432.11 352.03,430.03 353.20,430.19  C354.37,430.36 355.01,432.71 354.63,435.44  Z" fill="none" stroke="#e6e6e6" stroke-width="1.44" />
<path d="M352.20,446.29  C351.73,449.61 350.65,452.20 349.79,452.08  C348.93,451.96 348.61,449.17 349.08,445.85  C349.55,442.53 350.63,439.94 351.49,440.06  C352.35,440.18 352.67,442.97 352.20,446.29  Z" fill="none" stroke="#e6e6e6" stroke-width="1.44" />
<path d="M349.29,457.67  C348.64,461.37 347.48,464.25 346.70,464.11  C345.93,463.97 345.82,460.87 346.47,457.18  C347.13,453.49 348.29,450.61 349.07,450.75  C349.84,450.88 349.95,453.99 349.29,457.67  Z" fill="none" stroke="#e6e6e6" stroke-width="1.44" />
<path d="M345.63,469.02  C344.91,472.40 343.67,475.00 342.86,474.83  C342.05,474.66 341.97,471.78 342.69,468.40  C343.41,465.02 344.65,462.43 345.46,462.60  C346.28,462.77 346.35,465.65 345.63,469.02  Z" fill="none" stroke="#e6e6e6" stroke-width="1.44" />
<path d="M343.07,479.01  C342.13,482.74 340.52,485.56 339.47,485.29  C338.41,485.03 338.31,481.79 339.24,478.06  C340.18,474.33 341.79,471.51 342.85,471.78  C343.90,472.04 344.00,475.28 343.07,479.01  Z" fill="none" stroke="#e6e6e6" stroke-width="1.44" /><path d="M283.18,450.61  L377.48,450.61" stroke="#901818" stroke-width="0.8"/><path d="M330.60,414.43  L330.60,486.93" stroke="#20208a" stroke-width="0.8"/></g><!--/thumb-->
  <rect x="322.6" y="465.6" width="53.2" height="56.8" fill="#fff"/>
  <g fill="#000"><rect x="340.50" y="466.20" width="7.20" height="3.60"/><rect x="336.90" y="469.80" width="3.60" height="28.80"/><rect x="347.70" y="469.80" width="3.60" height="21.60"/><rect x="351.30" y="480.60" width="14.40" height="3.60"/><rect x="358.50" y="484.20" width="3.60" height="7.20"/><rect x="365.70" y="484.20" width="7.20" height="3.60"/><rect x="365.70" y="487.80" width="3.60" height="3.60"/><rect x="372.90" y="487.80" width="3.60" height="18.00"/><rect x="326.10" y="487.80" width="7.20" height="3.60"/><rect x="322.50" y="491.40" width="3.60" height="7.20"/><rect x="333.30" y="491.40" width="3.60" height="3.60"/><rect x="326.10" y="498.60" width="3.60" height="3.60"/><rect x="329.70" y="502.20" width="3.60" height="7.20"/><rect x="333.30" y="509.40" width="3.60" height="3.60"/><rect x="336.90" y="513.00" width="3.60" height="3.60"/><rect x="340.50" y="516.60" width="3.60" height="7.20"/><rect x="340.50" y="520.20" width="21.60" height="3.60"/><rect x="358.50" y="516.60" width="3.60" height="3.60"/><rect x="362.10" y="520.20" width="7.20" height="3.60"/><rect x="365.70" y="513.00" width="3.60" height="10.80"/><rect x="369.30" y="505.80" width="3.60" height="7.20"/><rect x="347.70" y="498.60" width="3.60" height="14.40"/><rect x="354.90" y="498.60" width="3.60" height="14.40"/><rect x="362.10" y="498.60" width="3.60" height="14.40"/></g>
</svg>
<!-- lower dock -->
<div class="a" style="left:199.5px;top:528.5px;width:199px;height:1.5px;background:#e2e2e2"></div>
<div class="a" style="left:199.5px;top:545.6px;width:199px;height:1px;background:#c8c8c8"></div>
<div class="a" style="left:199.5px;top:530.8px;width:65.5px;height:15.2px;background:linear-gradient(#f0f0f0,#e6e6e6);border:1px solid #c4c4c4;border-bottom:0;border-radius:3px 3px 0 0"></div>
<div class="a" style="left:265px;top:530.3px;width:65px;height:16.3px;background:linear-gradient(#fcfcfc,#f4f4f4);border:1px solid #c4c4c4;border-bottom:0;border-radius:3px 3px 0 0"></div>
<div class="a" style="left:200.3px;top:546.5px;width:197px;height:175.8px;background:#fff;border:1px solid #b4b4b4;box-shadow:1px 1px 0 #d6d6d6"></div>
<div class="a" style="left:201.3px;top:547.5px;width:195px;height:14px;background:linear-gradient(#ffffff,#f4f4f4);border-bottom:1px solid #e6e6e6"></div>
<div class="a" style="left:201.3px;top:562px;width:195px;height:12px;background:#e9e9e9"></div>
<div class="a" style="left:201.3px;top:574px;width:195px;height:9.5px;background:#f6f6f6"></div>
<svg class="a" style="left:0;top:0" width="1063" height="733" viewBox="0 0 1063 733">
  <circle cx="202.8" cy="536.3" r="2.6" fill="none" stroke="#7ab0d0" stroke-width="1"/><line x1="204.6" y1="538.2" x2="207" y2="541" stroke="#3a98c8" stroke-width="1.3"/>
  <g stroke="#444" stroke-width="0.7" fill="none"><rect x="254.3" y="535.4" width="5" height="5"/><path d="M253.8,534.9 l6,6 m0,-6 l-6,6"/></g>
  <path d="M265.5,533 C270,531 274,533 274,537 C274,541 270,543 266,542 z" fill="#1ea3d8"/>
  <path d="M205.5,569.5 L208.5,566.5 L208.5,569.5 z" fill="#222"/>
  <rect x="213.8" y="563.8" width="7" height="7.2" fill="#f6f6f6" stroke="#c2c2c2" stroke-width="0.7"/>
  <g fill="#3a78a8"><rect x="225" y="563" width="3" height="3"/><rect x="229" y="563" width="3" height="3"/><rect x="225" y="567" width="3" height="3"/><rect x="229" y="567" width="3" height="3" fill="#9ab8d0"/><rect x="227" y="569.5" width="3" height="2" fill="#5a8ab8"/></g>
  <rect x="225" y="576" width="3.5" height="5.5" fill="#2a7ab0"/>
  <g fill="#444"><rect x="235" y="575" width="3" height="3"/><rect x="239" y="575" width="3" height="3" fill="#999"/><rect x="235" y="579" width="3" height="3" fill="#888"/><rect x="239" y="579" width="3" height="3"/></g>
</svg>
<div class="q" style="left:216px;top:534.6px;font-size:6px;color:#333">Property List</div>
<div class="q" style="left:283.8px;top:535.3px;color:#333">Datamanager</div>
<div class="q" style="left:203px;top:552.8px;font-size:5.8px;color:#333">Data Manager</div>
<div class="q" style="left:235.8px;top:565.2px;font-size:6.6px;color:#333">Pic3D</div>
<div class="q" style="left:247px;top:576.2px;color:#333">Pic3D_Sobel</div>
<!-- slider column -->
<svg class="a" style="left:0;top:0" width="1063" height="733" viewBox="0 0 1063 733">
  <defs>
    <pattern id="tick" x="1033" y="111" width="10" height="4.8" patternUnits="userSpaceOnUse"><rect width="10" height="4.8" fill="#5c93b3"/><rect x="1" y="1.5" width="7" height="1.3" fill="#33607e"/></pattern>
    <pattern id="lab" x="1042.2" y="107" width="12.5" height="3.9" patternUnits="userSpaceOnUse"><rect width="12.5" height="3.9" fill="#f0f0f0"/><rect x="0.3" y="0.7" width="11.5" height="2.5" fill="#9c9892"/><rect x="2.8" y="1.3" width="0.8" height="1.3" fill="#e8e8e8"/><rect x="5.6" y="1.3" width="0.8" height="1.3" fill="#e8e8e8"/><rect x="8.6" y="1.3" width="0.8" height="1.3" fill="#e8e8e8"/></pattern>
  </defs>
  <rect x="1034.5" y="108.8" width="5.5" height="1.2" fill="#555"/>
  <rect x="1033" y="111" width="8.8" height="566.5" fill="url(#tick)"/>
  <rect x="1040.6" y="111" width="1.2" height="566.5" fill="#3b5f78"/>
  <rect x="1042.2" y="107" width="12.5" height="575" fill="url(#lab)"/>
  <rect x="1031.9" y="693.4" width="26.1" height="11.6" fill="#fff" stroke="#ddd" stroke-width="0.7"/>
  <rect x="1031.9" y="706.8" width="26.1" height="10.6" fill="#fff" stroke="#ddd" stroke-width="0.7"/>
  <circle cx="1062" cy="733" r="5" fill="#8acf8a" stroke="#5a9a5a" stroke-width="0.8"/>
  <rect x="1000" y="727.5" width="1" height="6" fill="#c8c8c8"/><g fill="#9a9a9a" opacity="0.8"><rect x="1004" y="730.5" width="3" height="2.5"/><rect x="1009" y="730" width="10" height="3"/><rect x="1021" y="730.5" width="3" height="2.5"/><rect x="1026" y="730" width="12" height="3"/><rect x="1040" y="730.5" width="14" height="2.5"/></g>
</svg>
<div class="q" style="left:1033.5px;top:696.3px;color:#222;font-size:5.6px">11341</div>
<div class="q" style="left:1033.5px;top:709.3px;color:#222;font-size:5.6px">24677</div>
</body></html>
